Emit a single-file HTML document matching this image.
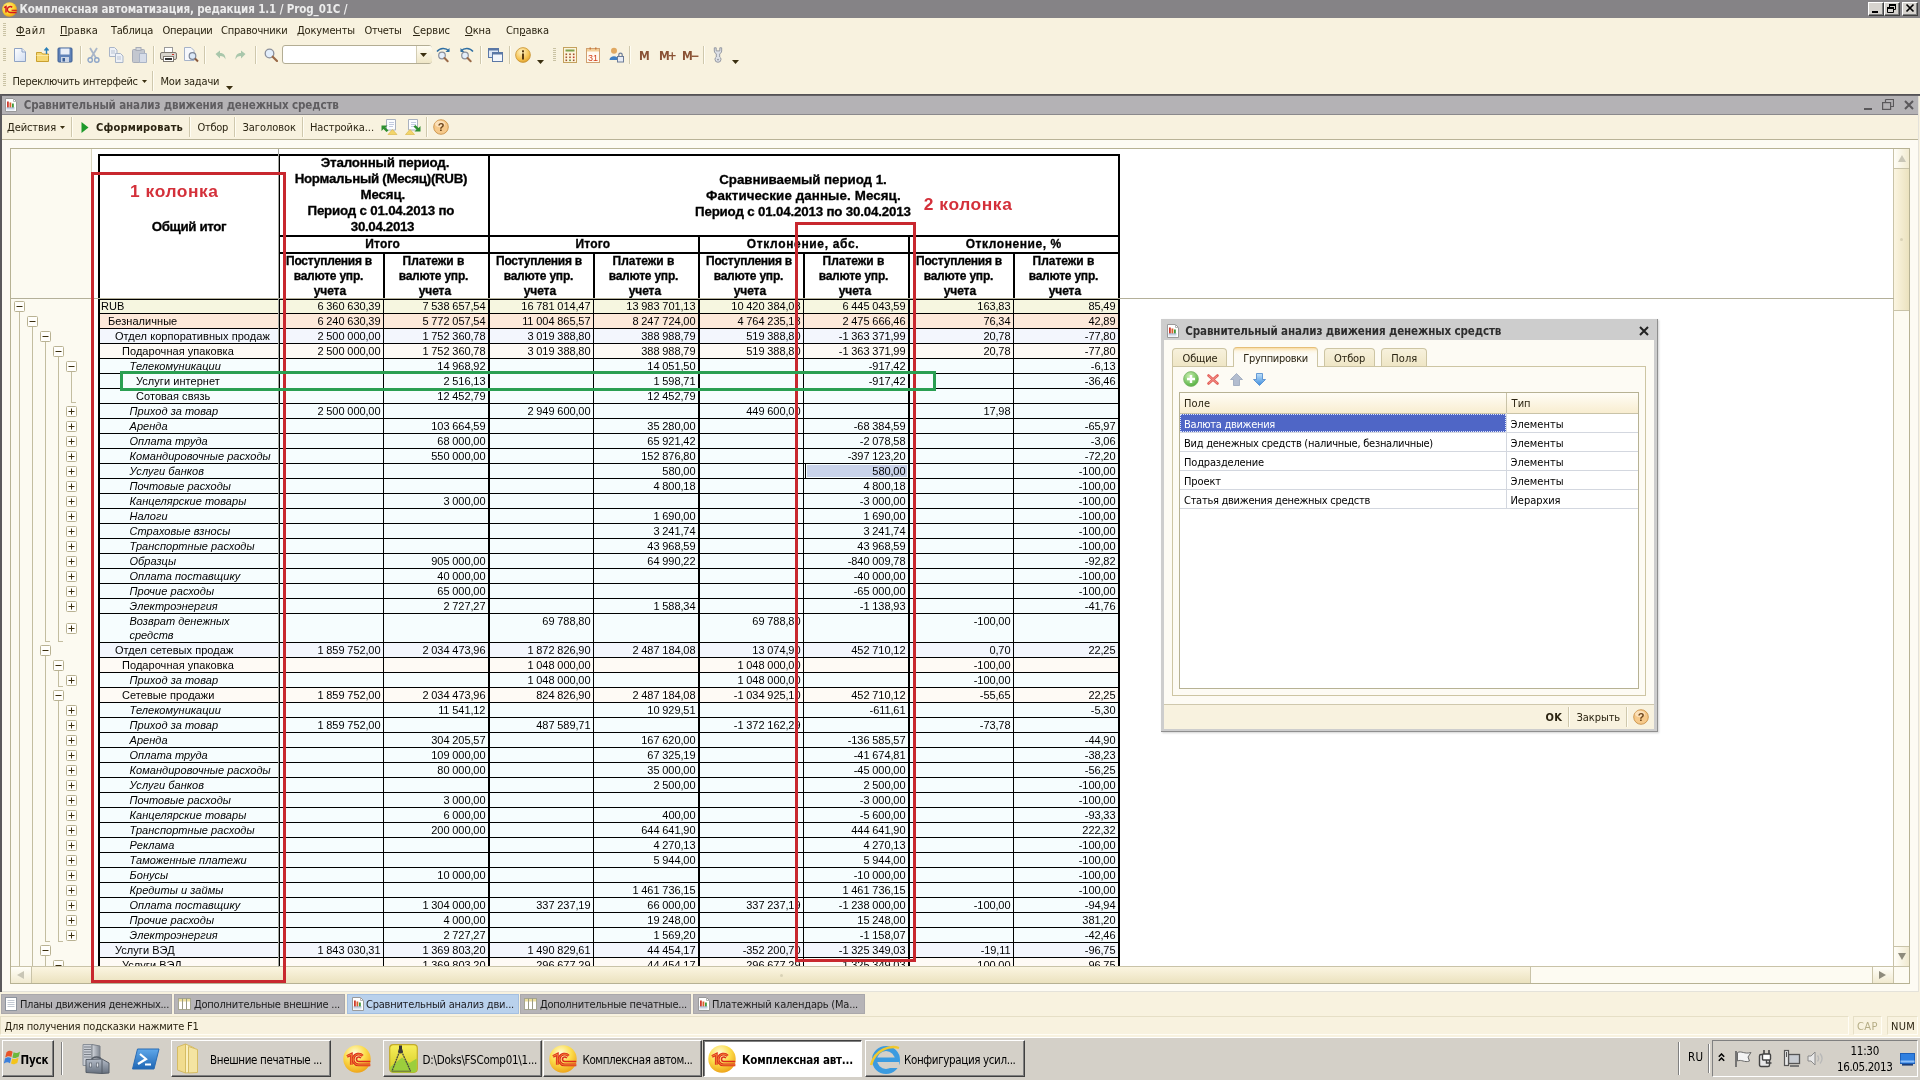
<!DOCTYPE html>
<html lang="ru"><head><meta charset="utf-8"><title>Комплексная автоматизация, редакция 1.1 / Prog_01C /</title>
<style>
html,body{margin:0;padding:0}
body{width:1920px;height:1080px;position:relative;overflow:hidden;background:#f8f2df;font-family:'DejaVu Sans Condensed','Liberation Sans',sans-serif;font-size:11px}
div,span.t,svg.a{position:absolute}
span.t{white-space:nowrap}
.clip{overflow:hidden}
#root{left:0;top:0;width:1920px;height:1080px;will-change:transform}
.wb{width:16px;height:14px;background:#d6d3ce;box-sizing:border-box;border:1px solid;border-color:#fff #404040 #404040 #fff;box-shadow:inset -1px -1px 0 #808080}
u{text-decoration:underline;text-underline-offset:1px}
</style></head>
<body>
<div id="root">
<div style="left:0px;top:0px;width:1920px;height:18px;background:#858386;"></div><svg class="a" style="left:2px;top:2px" width="15" height="15" viewBox="0 0 15 15"><defs><radialGradient id="g1c" cx="40%" cy="35%" r="70%"><stop offset="0" stop-color="#fff6a0"/><stop offset="0.6" stop-color="#fbd02c"/><stop offset="1" stop-color="#e99a12"/></radialGradient></defs><circle cx="7.5" cy="7.5" r="7.3" fill="url(#g1c)"/><path d="M2.2 5.6 L4 4.6 L4 10.6" fill="none" stroke="#d3171c" stroke-width="1.5"/><path d="M10.2 5.4 A2.9 2.9 0 1 0 8.6 10.4 L14.6 10.4" fill="none" stroke="#d3171c" stroke-width="1.5"/><path d="M9.6 8.3 L14.8 8.3" fill="none" stroke="#d3171c" stroke-width="1.1"/></svg><span class="t" style="top:2.12px;font-size:11.5px;line-height:15px;color:#ececec;font-weight:bold;letter-spacing:-0.110px;left:19.5px;">Комплексная автоматизация, редакция 1.1 / Prog_01C /</span><div class="wb" style="left:1868px;top:2px;"><svg width="16" height="14" viewBox="0 0 16 14" style="position:absolute;left:-1px;top:-2px"><rect x="4" y="10" width="6" height="2" fill="#000"/></svg></div><div class="wb" style="left:1884px;top:2px;"><svg width="16" height="14" viewBox="0 0 16 14" style="position:absolute;left:-1px;top:-2px"><path d="M5.5 3.5h6v5h-6z M5.5 4.5h6" fill="none" stroke="#000" stroke-width="1"/><rect x="5" y="3" width="7" height="2" fill="#000"/><path d="M3.5 6.5h6v5h-6z" fill="#d6d3ce" stroke="#000" stroke-width="1"/><rect x="3" y="6" width="7" height="2" fill="#000"/></svg></div><div class="wb" style="left:1902px;top:2px;"><svg width="16" height="14" viewBox="0 0 16 14" style="position:absolute;left:-1px;top:-2px"><path d="M4.5 3.5 L11.5 10.5 M11.5 3.5 L4.5 10.5" stroke="#000" stroke-width="1.7" fill="none"/></svg></div><div style="left:0px;top:18px;width:1920px;height:76px;background:#f8f2df;"></div><div style="left:3px;top:23px;width:3px;height:1px;background:#c9c2a3;"></div><div style="left:3px;top:25px;width:3px;height:1px;background:#c9c2a3;"></div><div style="left:3px;top:27px;width:3px;height:1px;background:#c9c2a3;"></div><div style="left:3px;top:29px;width:3px;height:1px;background:#c9c2a3;"></div><div style="left:3px;top:31px;width:3px;height:1px;background:#c9c2a3;"></div><div style="left:3px;top:33px;width:3px;height:1px;background:#c9c2a3;"></div><div style="left:3px;top:35px;width:3px;height:1px;background:#c9c2a3;"></div><span class="t" style="top:24.49px;font-size:11px;line-height:14px;color:#2b2412;letter-spacing:0.535px;left:16px;"><u>Ф</u>айл</span><span class="t" style="top:24.49px;font-size:11px;line-height:14px;color:#2b2412;letter-spacing:0.052px;left:60px;"><u>П</u>равка</span><span class="t" style="top:24.49px;font-size:11px;line-height:14px;color:#2b2412;letter-spacing:-0.252px;left:111px;">Таблица</span><span class="t" style="top:24.49px;font-size:11px;line-height:14px;color:#2b2412;letter-spacing:-0.287px;left:162.5px;">Операции</span><span class="t" style="top:24.49px;font-size:11px;line-height:14px;color:#2b2412;letter-spacing:-0.207px;left:221px;">Справочники</span><span class="t" style="top:24.49px;font-size:11px;line-height:14px;color:#2b2412;letter-spacing:-0.137px;left:297px;">Документы</span><span class="t" style="top:24.49px;font-size:11px;line-height:14px;color:#2b2412;letter-spacing:-0.346px;left:364.5px;">Отчеты</span><span class="t" style="top:24.49px;font-size:11px;line-height:14px;color:#2b2412;left:413px;"><u>С</u>ервис</span><span class="t" style="top:24.49px;font-size:11px;line-height:14px;color:#2b2412;letter-spacing:-0.078px;left:465px;"><u>О</u>кна</span><span class="t" style="top:24.49px;font-size:11px;line-height:14px;color:#2b2412;letter-spacing:-0.092px;left:506px;">Сп<u>р</u>авка</span><div style="left:3px;top:48px;width:3px;height:1px;background:#c9c2a3;"></div><div style="left:3px;top:50px;width:3px;height:1px;background:#c9c2a3;"></div><div style="left:3px;top:52px;width:3px;height:1px;background:#c9c2a3;"></div><div style="left:3px;top:54px;width:3px;height:1px;background:#c9c2a3;"></div><div style="left:3px;top:56px;width:3px;height:1px;background:#c9c2a3;"></div><div style="left:3px;top:58px;width:3px;height:1px;background:#c9c2a3;"></div><div style="left:3px;top:60px;width:3px;height:1px;background:#c9c2a3;"></div><svg class="a" style="left:13px;top:47px" width="14" height="16" viewBox="0 0 14 16"><defs><linearGradient id="gdoc" x1="0" y1="0" x2="1" y2="1"><stop offset="0" stop-color="#fff"/><stop offset="1" stop-color="#cfdcf2"/></linearGradient></defs><path d="M1.5 1.5h7.5l3.5 3.5v9.5h-11z" fill="url(#gdoc)" stroke="#8fa3c4"/><path d="M9 1.5v3.5h3.5" fill="#e8eefa" stroke="#8fa3c4"/></svg><svg class="a" style="left:35px;top:46px" width="16" height="17" viewBox="0 0 16 17"><path d="M1.5 6.5h5l1 1.5h6v7.5h-12z" fill="#f6d873" stroke="#c9a030"/><path d="M1.5 9.5h12" stroke="#fbe9a5"/><path d="M11.5 8V2.5M9.5 4.5l2-2.5l2 2.5" fill="none" stroke="#2a7fb8" stroke-width="1.4"/></svg><svg class="a" style="left:57px;top:47px" width="16" height="16" viewBox="0 0 16 16"><rect x="1" y="1" width="14" height="14" rx="1" fill="#5f82b8" stroke="#3d5f94"/><rect x="3.5" y="1.5" width="9" height="6" fill="#e9eef7"/><rect x="4" y="10" width="8" height="5" fill="#c9d4e6"/><rect x="5.5" y="11" width="2.5" height="3.5" fill="#3d5f94"/></svg><div style="left:80px;top:46px;width:1px;height:18px;background:#cfc8ad;"></div><div style="left:81px;top:46px;width:1px;height:18px;background:#fffdf3;"></div><svg class="a" style="left:87px;top:47px" width="13" height="16" viewBox="0 0 13 16"><path d="M3 1L9 11M10 1L4 11" stroke="#a9b6c8" stroke-width="1.8" fill="none"/><circle cx="3.2" cy="13" r="2.2" fill="none" stroke="#8ea6c8" stroke-width="1.4"/><circle cx="9.8" cy="13" r="2.2" fill="none" stroke="#8ea6c8" stroke-width="1.4"/></svg><svg class="a" style="left:108px;top:47px" width="16" height="16" viewBox="0 0 16 16"><path d="M1.5 0.5h5l2.5 2.5v6.5h-7.5z" fill="#eef1f6" stroke="#a9b5c8"/><path d="M7.5 6.5h5l2.5 2.5v6.5h-7.5z" fill="#eef1f6" stroke="#a9b5c8"/><path d="M3 4h4M3 6h4M9 10h4M9 12h4" stroke="#b9c3d3"/></svg><svg class="a" style="left:132px;top:47px" width="15" height="16" viewBox="0 0 15 16"><rect x="0.5" y="2.5" width="12" height="13" rx="1" fill="#c3c7cf" stroke="#a8adb8"/><rect x="4" y="0.5" width="5" height="3" fill="#d5d8de" stroke="#a8adb8"/><path d="M7.5 6.5h7v9h-7z" fill="#d6dce8" stroke="#aab4c6"/></svg><div style="left:153px;top:46px;width:1px;height:18px;background:#cfc8ad;"></div><div style="left:154px;top:46px;width:1px;height:18px;background:#fffdf3;"></div><svg class="a" style="left:160px;top:47px" width="17" height="16" viewBox="0 0 17 16"><rect x="4.5" y="0.5" width="8" height="6" fill="#fff" stroke="#9a9a9a"/><rect x="0.5" y="5.5" width="16" height="7" rx="1.5" fill="#d8d4cc" stroke="#7d7870"/><rect x="3.5" y="9.5" width="10" height="5" fill="#fff" stroke="#7d7870"/><rect x="5" y="11" width="7" height="2" fill="#333"/><rect x="12" y="7" width="2" height="1" fill="#d0342c"/></svg><svg class="a" style="left:183px;top:47px" width="16" height="16" viewBox="0 0 16 16"><path d="M1.5 0.5h6.5l3 3v10h-9.5z" fill="#f6f8fc" stroke="#a6b3c9"/><circle cx="9.5" cy="9" r="3.3" fill="#dbe8f7" stroke="#7d8799" stroke-width="1.2"/><path d="M12 11.5l3 3" stroke="#8a5a3c" stroke-width="2"/></svg><div style="left:204px;top:46px;width:1px;height:18px;background:#cfc8ad;"></div><div style="left:205px;top:46px;width:1px;height:18px;background:#fffdf3;"></div><svg class="a" style="left:215px;top:50px" width="11" height="10" viewBox="0 0 11 10"><path d="M0.5 4L5 0.5V3C9 3 10.5 5.5 10.5 9.5C9.5 7 8 6 5 6V8.5z" fill="#a9c7ab"/></svg><svg class="a" style="left:235px;top:50px" width="11" height="10" viewBox="0 0 11 10"><path d="M10.5 4L6 0.5V3C2 3 0.5 5.5 0.5 9.5C1.5 7 3 6 6 6V8.5z" fill="#a9c7ab"/></svg><div style="left:255px;top:46px;width:1px;height:18px;background:#cfc8ad;"></div><div style="left:256px;top:46px;width:1px;height:18px;background:#fffdf3;"></div><svg class="a" style="left:264px;top:48px" width="14" height="14" viewBox="0 0 14 14"><circle cx="5.5" cy="5.5" r="4.3" fill="#e3eefb" stroke="#8a8f9c" stroke-width="1.3"/><path d="M8.7 8.7l4.3 4.3" stroke="#9a6a48" stroke-width="2.2" stroke-linecap="round"/></svg><div style="left:282px;top:45px;width:150px;height:19px;background:#fff;border:1px solid #b3ad94;border-radius:3px;box-sizing:border-box;"></div><div style="left:416px;top:46px;width:15px;height:17px;background:linear-gradient(#fffdf4,#efe6c6);border-left:1px solid #d3cdb4;border-radius:0 2px 2px 0;"></div><svg class="a" style="left:420px;top:53px" width="7" height="4" viewBox="0 0 7 4"><polygon points="0,0 7,0 3.5,4" fill="#3a2f10"/></svg><svg class="a" style="left:436px;top:47px" width="15" height="16" viewBox="0 0 15 16"><path d="M1 4.5C4 0.5 10 0.5 13 4" fill="none" stroke="#2f6fa3" stroke-width="1.4"/><path d="M13.5 1v4h-4z" fill="#2f6fa3"/><circle cx="6" cy="8.5" r="3.3" fill="#e3eefb" stroke="#8a8f9c" stroke-width="1.2"/><path d="M8.5 11l3.2 3.2" stroke="#9a6a48" stroke-width="2" stroke-linecap="round"/></svg><svg class="a" style="left:459px;top:47px" width="15" height="16" viewBox="0 0 15 16"><g transform="translate(15,0) scale(-1,1)"><path d="M1 4.5C4 0.5 10 0.5 13 4" fill="none" stroke="#2f6fa3" stroke-width="1.4"/><path d="M13.5 1v4h-4z" fill="#2f6fa3"/></g><circle cx="6" cy="8.5" r="3.3" fill="#e3eefb" stroke="#8a8f9c" stroke-width="1.2"/><path d="M8.5 11l3.2 3.2" stroke="#9a6a48" stroke-width="2" stroke-linecap="round"/></svg><div style="left:480px;top:46px;width:1px;height:18px;background:#cfc8ad;"></div><div style="left:481px;top:46px;width:1px;height:18px;background:#fffdf3;"></div><svg class="a" style="left:488px;top:48px" width="15" height="14" viewBox="0 0 15 14"><rect x="0.5" y="0.5" width="10" height="9" fill="#dfe8f5" stroke="#5b78a6"/><rect x="0.5" y="0.5" width="10" height="2" fill="#5b78a6"/><rect x="4.5" y="4.5" width="10" height="9" fill="#f3f6fb" stroke="#5b78a6"/><rect x="4.5" y="4.5" width="10" height="2" fill="#5b78a6"/></svg><div style="left:509px;top:46px;width:1px;height:18px;background:#cfc8ad;"></div><div style="left:510px;top:46px;width:1px;height:18px;background:#fffdf3;"></div><svg class="a" style="left:515px;top:47px" width="16" height="16" viewBox="0 0 16 16"><defs><radialGradient id="ginf" cx="40%" cy="30%" r="75%"><stop offset="0" stop-color="#fff3c4"/><stop offset="0.7" stop-color="#f5c04c"/><stop offset="1" stop-color="#d99a2a"/></radialGradient></defs><circle cx="8" cy="8" r="7.4" fill="url(#ginf)" stroke="#c89436" stroke-width="0.8"/><rect x="7" y="6.5" width="2" height="6" fill="#5a3b12"/><rect x="7" y="3.3" width="2" height="2" fill="#5a3b12"/></svg><svg class="a" style="left:537px;top:60px" width="7" height="4" viewBox="0 0 7 4"><polygon points="0,0 7,0 3.5,4" fill="#3a2f10"/></svg><div style="left:553px;top:48px;width:3px;height:1px;background:#c9c2a3;"></div><div style="left:553px;top:50px;width:3px;height:1px;background:#c9c2a3;"></div><div style="left:553px;top:52px;width:3px;height:1px;background:#c9c2a3;"></div><div style="left:553px;top:54px;width:3px;height:1px;background:#c9c2a3;"></div><div style="left:553px;top:56px;width:3px;height:1px;background:#c9c2a3;"></div><div style="left:553px;top:58px;width:3px;height:1px;background:#c9c2a3;"></div><div style="left:553px;top:60px;width:3px;height:1px;background:#c9c2a3;"></div><svg class="a" style="left:563px;top:47px" width="14" height="16" viewBox="0 0 14 16"><rect x="0.5" y="0.5" width="13" height="15" fill="#fdf4dc" stroke="#c4a25e"/><rect x="2.5" y="2.5" width="9" height="2" fill="#7fa04c"/><g fill="#a0522d"><rect x="2.5" y="6.5" width="1.6" height="1.6"/><rect x="6.2" y="6.5" width="1.6" height="1.6"/><rect x="9.9" y="6.5" width="1.6" height="1.6"/><rect x="2.5" y="9.5" width="1.6" height="1.6"/><rect x="6.2" y="9.5" width="1.6" height="1.6"/><rect x="9.9" y="9.5" width="1.6" height="1.6" fill="#c23a2a"/><rect x="2.5" y="12.5" width="1.6" height="1.6"/><rect x="6.2" y="12.5" width="1.6" height="1.6" fill="#5a8a3a"/><rect x="9.9" y="12.5" width="1.6" height="1.6"/></g></svg><svg class="a" style="left:586px;top:47px" width="14" height="16" viewBox="0 0 14 16"><rect x="0.5" y="1.5" width="13" height="14" fill="#fffaf0" stroke="#cfa070"/><rect x="1" y="2" width="12" height="2.5" fill="#f4cf98"/><rect x="3.5" y="0.5" width="1.5" height="2" fill="#c8783c"/><rect x="9" y="0.5" width="1.5" height="2" fill="#c8783c"/><text x="7" y="13.5" font-size="9" font-family="Liberation Sans,sans-serif" text-anchor="middle" fill="#d3401c">31</text></svg><svg class="a" style="left:609px;top:47px" width="15" height="16" viewBox="0 0 15 16"><circle cx="5" cy="3.8" r="3" fill="#e0a860"/><path d="M0.5 13c0-5 9-5 9 0z" fill="#3f7fc4"/><rect x="8.5" y="9.5" width="6" height="5.5" fill="#e8ecf4" stroke="#6c7c98"/><path d="M9.8 9.5v-1.7a1.7 1.7 0 0 1 3.4 0v1.7" fill="none" stroke="#6c7c98" stroke-width="1.2"/></svg><div style="left:629px;top:46px;width:1px;height:18px;background:#cfc8ad;"></div><div style="left:630px;top:46px;width:1px;height:18px;background:#fffdf3;"></div><span class="t" style="top:48.45px;font-size:12px;line-height:16px;color:#8a5234;font-weight:bold;letter-spacing:-1.250px;left:639px;">M</span><span class="t" style="top:48.45px;font-size:12px;line-height:16px;color:#8a5234;font-weight:bold;letter-spacing:-1.898px;left:659px;">M+</span><span class="t" style="top:48.45px;font-size:12px;line-height:16px;color:#8a5234;font-weight:bold;letter-spacing:-2.148px;left:682px;">M−</span><div style="left:703px;top:46px;width:1px;height:18px;background:#cfc8ad;"></div><div style="left:704px;top:46px;width:1px;height:18px;background:#fffdf3;"></div><svg class="a" style="left:712px;top:47px" width="12" height="16" viewBox="0 0 12 16"><path d="M2.3 0.8v3.2q0 2 2 2.8v3.2q-1.3 0.7-1.3 2.3a3 3 0 0 0 6 0q0-1.6-1.3-2.3v-3.2q2-0.8 2-2.8v-3.2h-1.9v3.1h-3.6v-3.1z" fill="#dde0e6" stroke="#8d929c" stroke-width="0.9"/><circle cx="6" cy="12.6" r="0.9" fill="#8d929c"/></svg><svg class="a" style="left:732px;top:60px" width="7" height="4" viewBox="0 0 7 4"><polygon points="0,0 7,0 3.5,4" fill="#3a2f10"/></svg><div style="left:3px;top:73px;width:3px;height:1px;background:#c9c2a3;"></div><div style="left:3px;top:75px;width:3px;height:1px;background:#c9c2a3;"></div><div style="left:3px;top:77px;width:3px;height:1px;background:#c9c2a3;"></div><div style="left:3px;top:79px;width:3px;height:1px;background:#c9c2a3;"></div><div style="left:3px;top:81px;width:3px;height:1px;background:#c9c2a3;"></div><div style="left:3px;top:83px;width:3px;height:1px;background:#c9c2a3;"></div><div style="left:3px;top:85px;width:3px;height:1px;background:#c9c2a3;"></div><span class="t" style="top:74.79px;font-size:11px;line-height:14px;color:#2b2412;letter-spacing:-0.268px;left:12.4px;">Переключить интерфейс</span><svg class="a" style="left:142px;top:80px" width="5" height="3" viewBox="0 0 5 3"><polygon points="0,0 5,0 2.5,3" fill="#3a2f10"/></svg><div style="left:152px;top:71px;width:1px;height:20px;background:#cfc8ad;"></div><div style="left:153px;top:71px;width:1px;height:20px;background:#fffdf3;"></div><span class="t" style="top:74.79px;font-size:11px;line-height:14px;color:#2b2412;letter-spacing:-0.169px;left:160.4px;">Мои задачи</span><svg class="a" style="left:226px;top:86px" width="7" height="4" viewBox="0 0 7 4"><polygon points="0,0 7,0 3.5,4" fill="#3a2f10"/></svg><div style="left:0px;top:94px;width:1920px;height:2px;background:linear-gradient(#4c4a4d,#6c6a6d);"></div><div style="left:0px;top:96px;width:1920px;height:18px;background:#b4b2b5;"></div><div style="left:0px;top:114px;width:1920px;height:1px;background:#8b898c;"></div><div style="left:0px;top:115px;width:1920px;height:24px;background:#f8f2df;"></div><div style="left:0px;top:139px;width:1920px;height:1px;background:#b9b397;"></div><div style="left:0px;top:140px;width:1920px;height:852px;background:#fdfbf3;"></div><div style="left:0px;top:94px;width:2px;height:898px;background:#5c5a5d;"></div><div style="left:1918px;top:96px;width:1px;height:896px;background:#e4e2da;"></div><div style="left:1919px;top:96px;width:1px;height:896px;background:#f8f2df;"></div><div style="left:2px;top:991px;width:1917px;height:1px;background:#e4e2da;"></div><svg class="a" style="left:5px;top:98px" width="12" height="14" viewBox="0 0 12 14"><path d="M0.5 0.5h8l3 3v10h-11z" fill="#fff" stroke="#9a9a9a"/><path d="M8.5 0.5v3h3" fill="none" stroke="#b5b5b5"/><rect x="2" y="3.5" width="1.8" height="6" fill="#cf3b2e"/><rect x="4.5" y="4.5" width="1.8" height="5" fill="#d8622e"/><rect x="7" y="5.5" width="1.8" height="4" fill="#3f9a3a"/><path d="M1.5 10h8" stroke="#6a8ab8" stroke-width="0.8"/><path d="M1.5 11.8h8" stroke="#c4d0e4" stroke-width="0.8"/></svg><span class="t" style="top:98.22px;font-size:11.5px;line-height:15px;color:#5f5d60;font-weight:bold;letter-spacing:-0.137px;left:23.7px;">Сравнительный анализ движения денежных средств</span><div style="left:1864px;top:108px;width:8px;height:2px;background:#5a585b;"></div><svg class="a" style="left:1882px;top:99px" width="12" height="11" viewBox="0 0 12 11"><path d="M3.5 0.5h8v7h-2.5 M3.5 3v-2.5" fill="none" stroke="#5a585b" stroke-width="1.2"/><rect x="0.6" y="3.6" width="8" height="6.8" fill="none" stroke="#5a585b" stroke-width="1.2"/></svg><svg class="a" style="left:1904px;top:100px" width="10" height="10" viewBox="0 0 10 10"><path d="M1 1L9 9M9 1L1 9" stroke="#5a585b" stroke-width="2" fill="none"/></svg><span class="t" style="top:120.99px;font-size:11px;line-height:14px;color:#2b2412;letter-spacing:-0.084px;left:7px;">Действия</span><svg class="a" style="left:60px;top:126px" width="5" height="3" viewBox="0 0 5 3"><polygon points="0,0 5,0 2.5,3" fill="#3a2f10"/></svg><div style="left:71px;top:117px;width:1px;height:20px;background:#cfc8ad;"></div><div style="left:72px;top:117px;width:1px;height:20px;background:#fffdf3;"></div><svg class="a" style="left:81px;top:122px" width="8" height="11" viewBox="0 0 8 11"><path d="M0.5 0L7.5 5.5L0.5 11z" fill="#1d9a2a"/></svg><span class="t" style="top:120.99px;font-size:11px;line-height:14px;color:#2b2412;font-weight:bold;letter-spacing:0.182px;left:96px;">Сформировать</span><div style="left:189px;top:117px;width:1px;height:20px;background:#cfc8ad;"></div><div style="left:190px;top:117px;width:1px;height:20px;background:#fffdf3;"></div><span class="t" style="top:120.99px;font-size:11px;line-height:14px;color:#2b2412;letter-spacing:-0.300px;left:197.5px;">Отбор</span><div style="left:234px;top:117px;width:1px;height:20px;background:#cfc8ad;"></div><div style="left:235px;top:117px;width:1px;height:20px;background:#fffdf3;"></div><span class="t" style="top:120.99px;font-size:11px;line-height:14px;color:#2b2412;letter-spacing:-0.045px;left:242.5px;">Заголовок</span><div style="left:302px;top:117px;width:1px;height:20px;background:#cfc8ad;"></div><div style="left:303px;top:117px;width:1px;height:20px;background:#fffdf3;"></div><span class="t" style="top:120.99px;font-size:11px;line-height:14px;color:#2b2412;letter-spacing:-0.079px;left:310px;">Настройка...</span><svg class="a" style="left:381px;top:119px" width="17" height="16" viewBox="0 0 17 16"><path d="M5.5 0.5h9v10.5h-9z" fill="#fcfdff" stroke="#a9b1bf"/><path d="M7.5 3.5h5M7.5 5.5h5M7.5 7.5h4" stroke="#c3cbe0" stroke-width="1" shape-rendering="crispEdges"/><path d="M0.5 6.5h6l-2 2l3 3l-2 1.5l-3-3l-2 2z" fill="#2f8f2f"/><path d="M7 15.5l4.5-5l4.5 5z" fill="#f3d56a" stroke="#d8b440" stroke-width="0.6"/></svg><svg class="a" style="left:405px;top:119px" width="17" height="16" viewBox="0 0 17 16"><path d="M3.5 0.5h9v10.5h-9z" fill="#fcfdff" stroke="#a9b1bf"/><path d="M5.5 3.5h5M5.5 5.5h5M5.5 7.5h4" stroke="#c3cbe0" stroke-width="1" shape-rendering="crispEdges"/><path d="M15.5 12.5h-6l2-2l-3-3l2-1.5l3 3l2-2z" fill="#2f8f2f"/><path d="M0.5 15.5l4.5-5l4.5 5z" fill="#f3d56a" stroke="#d8b440" stroke-width="0.6"/></svg><div style="left:426px;top:117px;width:1px;height:20px;background:#cfc8ad;"></div><div style="left:427px;top:117px;width:1px;height:20px;background:#fffdf3;"></div><svg class="a" style="left:433px;top:119px" width="16" height="16" viewBox="0 0 16 16"><circle cx="8" cy="8" r="7.3" fill="#f6c98a" stroke="#c9924a" stroke-width="0.9"/><ellipse cx="7" cy="5" rx="5" ry="3.3" fill="#fde6c4" opacity="0.8"/><text x="8" y="12" font-size="11" font-weight="bold" font-family="Liberation Sans,sans-serif" text-anchor="middle" fill="#6a4218">?</text></svg><div style="left:10px;top:148px;width:1900px;height:836px;background:#fff;border:1px solid #b7b294;box-sizing:border-box;"></div><div style="left:11px;top:149px;width:81px;height:818px;background:#fcfaf1;"></div><div style="left:91px;top:149px;width:1px;height:149px;background:#d9d4bc;"></div><div style="left:1893px;top:149px;width:16px;height:818px;background:#fdfbf2;border-left:1px solid #c9c3a8;box-sizing:border-box;"></div><div style="left:1894px;top:149px;width:15px;height:20px;background:linear-gradient(90deg,#fffef8,#f1ead0);border-bottom:1px solid #c9c3a8;box-sizing:border-box;"></div><svg class="a" style="left:1898px;top:155px" width="8" height="7"><path d="M0 7L4 0L8 7z" fill="#c9c6b6"/></svg><div style="left:1894px;top:169px;width:15px;height:142px;background:linear-gradient(90deg,#fbf5e1,#ebe2bf);border-bottom:1px solid #c9c3a8;box-sizing:border-box;"></div><div style="left:1900px;top:238px;width:3px;height:3px;background:#d9d2b6;border-radius:2px;"></div><div style="left:1894px;top:946px;width:15px;height:21px;background:linear-gradient(90deg,#fffef8,#f1ead0);border-top:1px solid #c9c3a8;box-sizing:border-box;"></div><svg class="a" style="left:1898px;top:953px" width="8" height="7"><path d="M0 0L4 7L8 0z" fill="#8e8b7c"/></svg><div style="left:11px;top:966px;width:1898px;height:17px;background:#fdfbf2;border-top:1px solid #c9c3a8;box-sizing:border-box;"></div><div style="left:11px;top:967px;width:21px;height:16px;background:linear-gradient(#fffef8,#f1ead0);border-right:1px solid #c9c3a8;box-sizing:border-box;"></div><svg class="a" style="left:17px;top:971px" width="7" height="8"><path d="M7 0L0 4L7 8z" fill="#c9c6b6"/></svg><div style="left:32px;top:967px;width:1499px;height:16px;background:linear-gradient(#fbf5e1,#ebe2bf);border-right:1px solid #c9c3a8;box-sizing:border-box;"></div><div style="left:780px;top:974px;width:3px;height:3px;background:#d9d2b6;border-radius:2px;"></div><div style="left:1872px;top:967px;width:22px;height:16px;background:linear-gradient(#fffef8,#f1ead0);border-left:1px solid #c9c3a8;border-right:1px solid #c9c3a8;box-sizing:border-box;"></div><svg class="a" style="left:1879px;top:971px" width="7" height="8"><path d="M0 0L7 4L0 8z" fill="#8e8b7c"/></svg><div class="clip" style="left:11px;top:149px;width:1883px;height:817px"><div style="left:89px;top:150px;width:1019px;height:14px;background:#f6f6e0;"></div><div style="left:87px;top:164px;width:1022px;height:1px;background:#000;"></div><span class="t" style="top:149.99px;font-size:11px;line-height:14px;color:#000;font-family:'Liberation Sans',sans-serif;letter-spacing:0.050px;left:90px;">RUB</span><span class="t" style="right:1513.6px;top:149.99px;font-size:11px;line-height:14px;font-family:'Liberation Sans',sans-serif;letter-spacing:-0.1px">6 360 630,39</span><span class="t" style="right:1408.6px;top:149.99px;font-size:11px;line-height:14px;font-family:'Liberation Sans',sans-serif;letter-spacing:-0.1px">7 538 657,54</span><span class="t" style="right:1303.6px;top:149.99px;font-size:11px;line-height:14px;font-family:'Liberation Sans',sans-serif;letter-spacing:-0.1px">16 781 014,47</span><span class="t" style="right:1198.6px;top:149.99px;font-size:11px;line-height:14px;font-family:'Liberation Sans',sans-serif;letter-spacing:-0.1px">13 983 701,13</span><span class="t" style="right:1093.6px;top:149.99px;font-size:11px;line-height:14px;font-family:'Liberation Sans',sans-serif;letter-spacing:-0.1px">10 420 384,08</span><span class="t" style="right:988.6px;top:149.99px;font-size:11px;line-height:14px;font-family:'Liberation Sans',sans-serif;letter-spacing:-0.1px">6 445 043,59</span><span class="t" style="right:883.6px;top:149.99px;font-size:11px;line-height:14px;font-family:'Liberation Sans',sans-serif;letter-spacing:-0.1px">163,83</span><span class="t" style="right:778.6px;top:149.99px;font-size:11px;line-height:14px;font-family:'Liberation Sans',sans-serif;letter-spacing:-0.1px">85,49</span><div style="left:89px;top:165px;width:1019px;height:14px;background:#fde9da;"></div><div style="left:87px;top:179px;width:1022px;height:1px;background:#000;"></div><span class="t" style="top:164.99px;font-size:11px;line-height:14px;color:#000;font-family:'Liberation Sans',sans-serif;letter-spacing:0.050px;left:97px;">Безналичные</span><span class="t" style="right:1513.6px;top:164.99px;font-size:11px;line-height:14px;font-family:'Liberation Sans',sans-serif;letter-spacing:-0.1px">6 240 630,39</span><span class="t" style="right:1408.6px;top:164.99px;font-size:11px;line-height:14px;font-family:'Liberation Sans',sans-serif;letter-spacing:-0.1px">5 772 057,54</span><span class="t" style="right:1303.6px;top:164.99px;font-size:11px;line-height:14px;font-family:'Liberation Sans',sans-serif;letter-spacing:-0.1px">11 004 865,57</span><span class="t" style="right:1198.6px;top:164.99px;font-size:11px;line-height:14px;font-family:'Liberation Sans',sans-serif;letter-spacing:-0.1px">8 247 724,00</span><span class="t" style="right:1093.6px;top:164.99px;font-size:11px;line-height:14px;font-family:'Liberation Sans',sans-serif;letter-spacing:-0.1px">4 764 235,18</span><span class="t" style="right:988.6px;top:164.99px;font-size:11px;line-height:14px;font-family:'Liberation Sans',sans-serif;letter-spacing:-0.1px">2 475 666,46</span><span class="t" style="right:883.6px;top:164.99px;font-size:11px;line-height:14px;font-family:'Liberation Sans',sans-serif;letter-spacing:-0.1px">76,34</span><span class="t" style="right:778.6px;top:164.99px;font-size:11px;line-height:14px;font-family:'Liberation Sans',sans-serif;letter-spacing:-0.1px">42,89</span><div style="left:89px;top:180px;width:1019px;height:14px;background:#f3f6fd;"></div><div style="left:87px;top:194px;width:1022px;height:1px;background:#000;"></div><span class="t" style="top:179.99px;font-size:11px;line-height:14px;color:#000;font-family:'Liberation Sans',sans-serif;letter-spacing:0.050px;left:104px;">Отдел корпоративных продаж</span><span class="t" style="right:1513.6px;top:179.99px;font-size:11px;line-height:14px;font-family:'Liberation Sans',sans-serif;letter-spacing:-0.1px">2 500 000,00</span><span class="t" style="right:1408.6px;top:179.99px;font-size:11px;line-height:14px;font-family:'Liberation Sans',sans-serif;letter-spacing:-0.1px">1 752 360,78</span><span class="t" style="right:1303.6px;top:179.99px;font-size:11px;line-height:14px;font-family:'Liberation Sans',sans-serif;letter-spacing:-0.1px">3 019 388,80</span><span class="t" style="right:1198.6px;top:179.99px;font-size:11px;line-height:14px;font-family:'Liberation Sans',sans-serif;letter-spacing:-0.1px">388 988,79</span><span class="t" style="right:1093.6px;top:179.99px;font-size:11px;line-height:14px;font-family:'Liberation Sans',sans-serif;letter-spacing:-0.1px">519 388,80</span><span class="t" style="right:988.6px;top:179.99px;font-size:11px;line-height:14px;font-family:'Liberation Sans',sans-serif;letter-spacing:-0.1px">-1 363 371,99</span><span class="t" style="right:883.6px;top:179.99px;font-size:11px;line-height:14px;font-family:'Liberation Sans',sans-serif;letter-spacing:-0.1px">20,78</span><span class="t" style="right:778.6px;top:179.99px;font-size:11px;line-height:14px;font-family:'Liberation Sans',sans-serif;letter-spacing:-0.1px">-77,80</span><div style="left:89px;top:195px;width:1019px;height:14px;background:#fefaf5;"></div><div style="left:87px;top:209px;width:1022px;height:1px;background:#000;"></div><span class="t" style="top:194.99px;font-size:11px;line-height:14px;color:#000;font-family:'Liberation Sans',sans-serif;letter-spacing:0.050px;left:111px;">Подарочная упаковка</span><span class="t" style="right:1513.6px;top:194.99px;font-size:11px;line-height:14px;font-family:'Liberation Sans',sans-serif;letter-spacing:-0.1px">2 500 000,00</span><span class="t" style="right:1408.6px;top:194.99px;font-size:11px;line-height:14px;font-family:'Liberation Sans',sans-serif;letter-spacing:-0.1px">1 752 360,78</span><span class="t" style="right:1303.6px;top:194.99px;font-size:11px;line-height:14px;font-family:'Liberation Sans',sans-serif;letter-spacing:-0.1px">3 019 388,80</span><span class="t" style="right:1198.6px;top:194.99px;font-size:11px;line-height:14px;font-family:'Liberation Sans',sans-serif;letter-spacing:-0.1px">388 988,79</span><span class="t" style="right:1093.6px;top:194.99px;font-size:11px;line-height:14px;font-family:'Liberation Sans',sans-serif;letter-spacing:-0.1px">519 388,80</span><span class="t" style="right:988.6px;top:194.99px;font-size:11px;line-height:14px;font-family:'Liberation Sans',sans-serif;letter-spacing:-0.1px">-1 363 371,99</span><span class="t" style="right:883.6px;top:194.99px;font-size:11px;line-height:14px;font-family:'Liberation Sans',sans-serif;letter-spacing:-0.1px">20,78</span><span class="t" style="right:778.6px;top:194.99px;font-size:11px;line-height:14px;font-family:'Liberation Sans',sans-serif;letter-spacing:-0.1px">-77,80</span><div style="left:89px;top:210px;width:1019px;height:14px;background:#f6fdfe;"></div><div style="left:87px;top:224px;width:1022px;height:1px;background:#000;"></div><span class="t" style="top:209.99px;font-size:11px;line-height:14px;color:#000;font-family:'Liberation Sans',sans-serif;font-style:italic;letter-spacing:0.050px;left:118.5px;">Телекомуникации</span><span class="t" style="right:1408.6px;top:209.99px;font-size:11px;line-height:14px;font-family:'Liberation Sans',sans-serif;letter-spacing:-0.1px">14 968,92</span><span class="t" style="right:1198.6px;top:209.99px;font-size:11px;line-height:14px;font-family:'Liberation Sans',sans-serif;letter-spacing:-0.1px">14 051,50</span><span class="t" style="right:988.6px;top:209.99px;font-size:11px;line-height:14px;font-family:'Liberation Sans',sans-serif;letter-spacing:-0.1px">-917,42</span><span class="t" style="right:778.6px;top:209.99px;font-size:11px;line-height:14px;font-family:'Liberation Sans',sans-serif;letter-spacing:-0.1px">-6,13</span><div style="left:89px;top:225px;width:1019px;height:14px;background:#f6fdfe;"></div><div style="left:87px;top:239px;width:1022px;height:1px;background:#000;"></div><span class="t" style="top:224.99px;font-size:11px;line-height:14px;color:#000;font-family:'Liberation Sans',sans-serif;letter-spacing:0.050px;left:125px;">Услуги интернет</span><span class="t" style="right:1408.6px;top:224.99px;font-size:11px;line-height:14px;font-family:'Liberation Sans',sans-serif;letter-spacing:-0.1px">2 516,13</span><span class="t" style="right:1198.6px;top:224.99px;font-size:11px;line-height:14px;font-family:'Liberation Sans',sans-serif;letter-spacing:-0.1px">1 598,71</span><span class="t" style="right:988.6px;top:224.99px;font-size:11px;line-height:14px;font-family:'Liberation Sans',sans-serif;letter-spacing:-0.1px">-917,42</span><span class="t" style="right:778.6px;top:224.99px;font-size:11px;line-height:14px;font-family:'Liberation Sans',sans-serif;letter-spacing:-0.1px">-36,46</span><div style="left:89px;top:240px;width:1019px;height:14px;background:#f6fdfe;"></div><div style="left:87px;top:254px;width:1022px;height:1px;background:#000;"></div><span class="t" style="top:239.99px;font-size:11px;line-height:14px;color:#000;font-family:'Liberation Sans',sans-serif;letter-spacing:0.050px;left:125px;">Сотовая связь</span><span class="t" style="right:1408.6px;top:239.99px;font-size:11px;line-height:14px;font-family:'Liberation Sans',sans-serif;letter-spacing:-0.1px">12 452,79</span><span class="t" style="right:1198.6px;top:239.99px;font-size:11px;line-height:14px;font-family:'Liberation Sans',sans-serif;letter-spacing:-0.1px">12 452,79</span><div style="left:89px;top:255px;width:1019px;height:14px;background:#f6fdfe;"></div><div style="left:87px;top:269px;width:1022px;height:1px;background:#000;"></div><span class="t" style="top:254.99px;font-size:11px;line-height:14px;color:#000;font-family:'Liberation Sans',sans-serif;font-style:italic;letter-spacing:0.050px;left:118.5px;">Приход за товар</span><span class="t" style="right:1513.6px;top:254.99px;font-size:11px;line-height:14px;font-family:'Liberation Sans',sans-serif;letter-spacing:-0.1px">2 500 000,00</span><span class="t" style="right:1303.6px;top:254.99px;font-size:11px;line-height:14px;font-family:'Liberation Sans',sans-serif;letter-spacing:-0.1px">2 949 600,00</span><span class="t" style="right:1093.6px;top:254.99px;font-size:11px;line-height:14px;font-family:'Liberation Sans',sans-serif;letter-spacing:-0.1px">449 600,00</span><span class="t" style="right:883.6px;top:254.99px;font-size:11px;line-height:14px;font-family:'Liberation Sans',sans-serif;letter-spacing:-0.1px">17,98</span><div style="left:89px;top:270px;width:1019px;height:14px;background:#f6fdfe;"></div><div style="left:87px;top:284px;width:1022px;height:1px;background:#000;"></div><span class="t" style="top:269.99px;font-size:11px;line-height:14px;color:#000;font-family:'Liberation Sans',sans-serif;font-style:italic;letter-spacing:0.050px;left:118.5px;">Аренда</span><span class="t" style="right:1408.6px;top:269.99px;font-size:11px;line-height:14px;font-family:'Liberation Sans',sans-serif;letter-spacing:-0.1px">103 664,59</span><span class="t" style="right:1198.6px;top:269.99px;font-size:11px;line-height:14px;font-family:'Liberation Sans',sans-serif;letter-spacing:-0.1px">35 280,00</span><span class="t" style="right:988.6px;top:269.99px;font-size:11px;line-height:14px;font-family:'Liberation Sans',sans-serif;letter-spacing:-0.1px">-68 384,59</span><span class="t" style="right:778.6px;top:269.99px;font-size:11px;line-height:14px;font-family:'Liberation Sans',sans-serif;letter-spacing:-0.1px">-65,97</span><div style="left:89px;top:285px;width:1019px;height:14px;background:#f6fdfe;"></div><div style="left:87px;top:299px;width:1022px;height:1px;background:#000;"></div><span class="t" style="top:284.99px;font-size:11px;line-height:14px;color:#000;font-family:'Liberation Sans',sans-serif;font-style:italic;letter-spacing:0.050px;left:118.5px;">Оплата труда</span><span class="t" style="right:1408.6px;top:284.99px;font-size:11px;line-height:14px;font-family:'Liberation Sans',sans-serif;letter-spacing:-0.1px">68 000,00</span><span class="t" style="right:1198.6px;top:284.99px;font-size:11px;line-height:14px;font-family:'Liberation Sans',sans-serif;letter-spacing:-0.1px">65 921,42</span><span class="t" style="right:988.6px;top:284.99px;font-size:11px;line-height:14px;font-family:'Liberation Sans',sans-serif;letter-spacing:-0.1px">-2 078,58</span><span class="t" style="right:778.6px;top:284.99px;font-size:11px;line-height:14px;font-family:'Liberation Sans',sans-serif;letter-spacing:-0.1px">-3,06</span><div style="left:89px;top:300px;width:1019px;height:14px;background:#f6fdfe;"></div><div style="left:87px;top:314px;width:1022px;height:1px;background:#000;"></div><span class="t" style="top:299.99px;font-size:11px;line-height:14px;color:#000;font-family:'Liberation Sans',sans-serif;font-style:italic;letter-spacing:0.050px;left:118.5px;">Командировочные расходы</span><span class="t" style="right:1408.6px;top:299.99px;font-size:11px;line-height:14px;font-family:'Liberation Sans',sans-serif;letter-spacing:-0.1px">550 000,00</span><span class="t" style="right:1198.6px;top:299.99px;font-size:11px;line-height:14px;font-family:'Liberation Sans',sans-serif;letter-spacing:-0.1px">152 876,80</span><span class="t" style="right:988.6px;top:299.99px;font-size:11px;line-height:14px;font-family:'Liberation Sans',sans-serif;letter-spacing:-0.1px">-397 123,20</span><span class="t" style="right:778.6px;top:299.99px;font-size:11px;line-height:14px;font-family:'Liberation Sans',sans-serif;letter-spacing:-0.1px">-72,20</span><div style="left:89px;top:315px;width:1019px;height:14px;background:#f6fdfe;"></div><div style="left:87px;top:329px;width:1022px;height:1px;background:#000;"></div><span class="t" style="top:314.99px;font-size:11px;line-height:14px;color:#000;font-family:'Liberation Sans',sans-serif;font-style:italic;letter-spacing:0.050px;left:118.5px;">Услуги банков</span><span class="t" style="right:1198.6px;top:314.99px;font-size:11px;line-height:14px;font-family:'Liberation Sans',sans-serif;letter-spacing:-0.1px">580,00</span><span class="t" style="right:988.6px;top:314.99px;font-size:11px;line-height:14px;font-family:'Liberation Sans',sans-serif;letter-spacing:-0.1px">580,00</span><span class="t" style="right:778.6px;top:314.99px;font-size:11px;line-height:14px;font-family:'Liberation Sans',sans-serif;letter-spacing:-0.1px">-100,00</span><div style="left:89px;top:330px;width:1019px;height:14px;background:#f6fdfe;"></div><div style="left:87px;top:344px;width:1022px;height:1px;background:#000;"></div><span class="t" style="top:329.99px;font-size:11px;line-height:14px;color:#000;font-family:'Liberation Sans',sans-serif;font-style:italic;letter-spacing:0.050px;left:118.5px;">Почтовые расходы</span><span class="t" style="right:1198.6px;top:329.99px;font-size:11px;line-height:14px;font-family:'Liberation Sans',sans-serif;letter-spacing:-0.1px">4 800,18</span><span class="t" style="right:988.6px;top:329.99px;font-size:11px;line-height:14px;font-family:'Liberation Sans',sans-serif;letter-spacing:-0.1px">4 800,18</span><span class="t" style="right:778.6px;top:329.99px;font-size:11px;line-height:14px;font-family:'Liberation Sans',sans-serif;letter-spacing:-0.1px">-100,00</span><div style="left:89px;top:345px;width:1019px;height:14px;background:#f6fdfe;"></div><div style="left:87px;top:359px;width:1022px;height:1px;background:#000;"></div><span class="t" style="top:344.99px;font-size:11px;line-height:14px;color:#000;font-family:'Liberation Sans',sans-serif;font-style:italic;letter-spacing:0.050px;left:118.5px;">Канцелярские товары</span><span class="t" style="right:1408.6px;top:344.99px;font-size:11px;line-height:14px;font-family:'Liberation Sans',sans-serif;letter-spacing:-0.1px">3 000,00</span><span class="t" style="right:988.6px;top:344.99px;font-size:11px;line-height:14px;font-family:'Liberation Sans',sans-serif;letter-spacing:-0.1px">-3 000,00</span><span class="t" style="right:778.6px;top:344.99px;font-size:11px;line-height:14px;font-family:'Liberation Sans',sans-serif;letter-spacing:-0.1px">-100,00</span><div style="left:89px;top:360px;width:1019px;height:14px;background:#f6fdfe;"></div><div style="left:87px;top:374px;width:1022px;height:1px;background:#000;"></div><span class="t" style="top:359.99px;font-size:11px;line-height:14px;color:#000;font-family:'Liberation Sans',sans-serif;font-style:italic;letter-spacing:0.050px;left:118.5px;">Налоги</span><span class="t" style="right:1198.6px;top:359.99px;font-size:11px;line-height:14px;font-family:'Liberation Sans',sans-serif;letter-spacing:-0.1px">1 690,00</span><span class="t" style="right:988.6px;top:359.99px;font-size:11px;line-height:14px;font-family:'Liberation Sans',sans-serif;letter-spacing:-0.1px">1 690,00</span><span class="t" style="right:778.6px;top:359.99px;font-size:11px;line-height:14px;font-family:'Liberation Sans',sans-serif;letter-spacing:-0.1px">-100,00</span><div style="left:89px;top:375px;width:1019px;height:14px;background:#f6fdfe;"></div><div style="left:87px;top:389px;width:1022px;height:1px;background:#000;"></div><span class="t" style="top:374.99px;font-size:11px;line-height:14px;color:#000;font-family:'Liberation Sans',sans-serif;font-style:italic;letter-spacing:0.050px;left:118.5px;">Страховые взносы</span><span class="t" style="right:1198.6px;top:374.99px;font-size:11px;line-height:14px;font-family:'Liberation Sans',sans-serif;letter-spacing:-0.1px">3 241,74</span><span class="t" style="right:988.6px;top:374.99px;font-size:11px;line-height:14px;font-family:'Liberation Sans',sans-serif;letter-spacing:-0.1px">3 241,74</span><span class="t" style="right:778.6px;top:374.99px;font-size:11px;line-height:14px;font-family:'Liberation Sans',sans-serif;letter-spacing:-0.1px">-100,00</span><div style="left:89px;top:390px;width:1019px;height:14px;background:#f6fdfe;"></div><div style="left:87px;top:404px;width:1022px;height:1px;background:#000;"></div><span class="t" style="top:389.99px;font-size:11px;line-height:14px;color:#000;font-family:'Liberation Sans',sans-serif;font-style:italic;letter-spacing:0.050px;left:118.5px;">Транспортные расходы</span><span class="t" style="right:1198.6px;top:389.99px;font-size:11px;line-height:14px;font-family:'Liberation Sans',sans-serif;letter-spacing:-0.1px">43 968,59</span><span class="t" style="right:988.6px;top:389.99px;font-size:11px;line-height:14px;font-family:'Liberation Sans',sans-serif;letter-spacing:-0.1px">43 968,59</span><span class="t" style="right:778.6px;top:389.99px;font-size:11px;line-height:14px;font-family:'Liberation Sans',sans-serif;letter-spacing:-0.1px">-100,00</span><div style="left:89px;top:405px;width:1019px;height:14px;background:#f6fdfe;"></div><div style="left:87px;top:419px;width:1022px;height:1px;background:#000;"></div><span class="t" style="top:404.99px;font-size:11px;line-height:14px;color:#000;font-family:'Liberation Sans',sans-serif;font-style:italic;letter-spacing:0.050px;left:118.5px;">Образцы</span><span class="t" style="right:1408.6px;top:404.99px;font-size:11px;line-height:14px;font-family:'Liberation Sans',sans-serif;letter-spacing:-0.1px">905 000,00</span><span class="t" style="right:1198.6px;top:404.99px;font-size:11px;line-height:14px;font-family:'Liberation Sans',sans-serif;letter-spacing:-0.1px">64 990,22</span><span class="t" style="right:988.6px;top:404.99px;font-size:11px;line-height:14px;font-family:'Liberation Sans',sans-serif;letter-spacing:-0.1px">-840 009,78</span><span class="t" style="right:778.6px;top:404.99px;font-size:11px;line-height:14px;font-family:'Liberation Sans',sans-serif;letter-spacing:-0.1px">-92,82</span><div style="left:89px;top:420px;width:1019px;height:14px;background:#f6fdfe;"></div><div style="left:87px;top:434px;width:1022px;height:1px;background:#000;"></div><span class="t" style="top:419.99px;font-size:11px;line-height:14px;color:#000;font-family:'Liberation Sans',sans-serif;font-style:italic;letter-spacing:0.050px;left:118.5px;">Оплата поставщику</span><span class="t" style="right:1408.6px;top:419.99px;font-size:11px;line-height:14px;font-family:'Liberation Sans',sans-serif;letter-spacing:-0.1px">40 000,00</span><span class="t" style="right:988.6px;top:419.99px;font-size:11px;line-height:14px;font-family:'Liberation Sans',sans-serif;letter-spacing:-0.1px">-40 000,00</span><span class="t" style="right:778.6px;top:419.99px;font-size:11px;line-height:14px;font-family:'Liberation Sans',sans-serif;letter-spacing:-0.1px">-100,00</span><div style="left:89px;top:435px;width:1019px;height:14px;background:#f6fdfe;"></div><div style="left:87px;top:449px;width:1022px;height:1px;background:#000;"></div><span class="t" style="top:434.99px;font-size:11px;line-height:14px;color:#000;font-family:'Liberation Sans',sans-serif;font-style:italic;letter-spacing:0.050px;left:118.5px;">Прочие расходы</span><span class="t" style="right:1408.6px;top:434.99px;font-size:11px;line-height:14px;font-family:'Liberation Sans',sans-serif;letter-spacing:-0.1px">65 000,00</span><span class="t" style="right:988.6px;top:434.99px;font-size:11px;line-height:14px;font-family:'Liberation Sans',sans-serif;letter-spacing:-0.1px">-65 000,00</span><span class="t" style="right:778.6px;top:434.99px;font-size:11px;line-height:14px;font-family:'Liberation Sans',sans-serif;letter-spacing:-0.1px">-100,00</span><div style="left:89px;top:450px;width:1019px;height:14px;background:#f6fdfe;"></div><div style="left:87px;top:464px;width:1022px;height:1px;background:#000;"></div><span class="t" style="top:449.99px;font-size:11px;line-height:14px;color:#000;font-family:'Liberation Sans',sans-serif;font-style:italic;letter-spacing:0.050px;left:118.5px;">Электроэнергия</span><span class="t" style="right:1408.6px;top:449.99px;font-size:11px;line-height:14px;font-family:'Liberation Sans',sans-serif;letter-spacing:-0.1px">2 727,27</span><span class="t" style="right:1198.6px;top:449.99px;font-size:11px;line-height:14px;font-family:'Liberation Sans',sans-serif;letter-spacing:-0.1px">1 588,34</span><span class="t" style="right:988.6px;top:449.99px;font-size:11px;line-height:14px;font-family:'Liberation Sans',sans-serif;letter-spacing:-0.1px">-1 138,93</span><span class="t" style="right:778.6px;top:449.99px;font-size:11px;line-height:14px;font-family:'Liberation Sans',sans-serif;letter-spacing:-0.1px">-41,76</span><div style="left:89px;top:465px;width:1019px;height:28px;background:#f6fdfe;"></div><div style="left:87px;top:493px;width:1022px;height:1px;background:#000;"></div><span class="t" style="top:464.99px;font-size:11px;line-height:14px;color:#000;font-family:'Liberation Sans',sans-serif;font-style:italic;left:118.5px;">Возврат денежных</span><span class="t" style="top:478.99px;font-size:11px;line-height:14px;color:#000;font-family:'Liberation Sans',sans-serif;font-style:italic;left:118.5px;">средств</span><span class="t" style="right:1303.6px;top:464.99px;font-size:11px;line-height:14px;font-family:'Liberation Sans',sans-serif;letter-spacing:-0.1px">69 788,80</span><span class="t" style="right:1093.6px;top:464.99px;font-size:11px;line-height:14px;font-family:'Liberation Sans',sans-serif;letter-spacing:-0.1px">69 788,80</span><span class="t" style="right:883.6px;top:464.99px;font-size:11px;line-height:14px;font-family:'Liberation Sans',sans-serif;letter-spacing:-0.1px">-100,00</span><div style="left:89px;top:494px;width:1019px;height:14px;background:#f3f6fd;"></div><div style="left:87px;top:508px;width:1022px;height:1px;background:#000;"></div><span class="t" style="top:493.99px;font-size:11px;line-height:14px;color:#000;font-family:'Liberation Sans',sans-serif;letter-spacing:0.050px;left:104px;">Отдел сетевых продаж</span><span class="t" style="right:1513.6px;top:493.99px;font-size:11px;line-height:14px;font-family:'Liberation Sans',sans-serif;letter-spacing:-0.1px">1 859 752,00</span><span class="t" style="right:1408.6px;top:493.99px;font-size:11px;line-height:14px;font-family:'Liberation Sans',sans-serif;letter-spacing:-0.1px">2 034 473,96</span><span class="t" style="right:1303.6px;top:493.99px;font-size:11px;line-height:14px;font-family:'Liberation Sans',sans-serif;letter-spacing:-0.1px">1 872 826,90</span><span class="t" style="right:1198.6px;top:493.99px;font-size:11px;line-height:14px;font-family:'Liberation Sans',sans-serif;letter-spacing:-0.1px">2 487 184,08</span><span class="t" style="right:1093.6px;top:493.99px;font-size:11px;line-height:14px;font-family:'Liberation Sans',sans-serif;letter-spacing:-0.1px">13 074,90</span><span class="t" style="right:988.6px;top:493.99px;font-size:11px;line-height:14px;font-family:'Liberation Sans',sans-serif;letter-spacing:-0.1px">452 710,12</span><span class="t" style="right:883.6px;top:493.99px;font-size:11px;line-height:14px;font-family:'Liberation Sans',sans-serif;letter-spacing:-0.1px">0,70</span><span class="t" style="right:778.6px;top:493.99px;font-size:11px;line-height:14px;font-family:'Liberation Sans',sans-serif;letter-spacing:-0.1px">22,25</span><div style="left:89px;top:509px;width:1019px;height:14px;background:#fefaf5;"></div><div style="left:87px;top:523px;width:1022px;height:1px;background:#000;"></div><span class="t" style="top:508.99px;font-size:11px;line-height:14px;color:#000;font-family:'Liberation Sans',sans-serif;letter-spacing:0.050px;left:111px;">Подарочная упаковка</span><span class="t" style="right:1303.6px;top:508.99px;font-size:11px;line-height:14px;font-family:'Liberation Sans',sans-serif;letter-spacing:-0.1px">1 048 000,00</span><span class="t" style="right:1093.6px;top:508.99px;font-size:11px;line-height:14px;font-family:'Liberation Sans',sans-serif;letter-spacing:-0.1px">1 048 000,00</span><span class="t" style="right:883.6px;top:508.99px;font-size:11px;line-height:14px;font-family:'Liberation Sans',sans-serif;letter-spacing:-0.1px">-100,00</span><div style="left:89px;top:524px;width:1019px;height:14px;background:#f6fdfe;"></div><div style="left:87px;top:538px;width:1022px;height:1px;background:#000;"></div><span class="t" style="top:523.99px;font-size:11px;line-height:14px;color:#000;font-family:'Liberation Sans',sans-serif;font-style:italic;letter-spacing:0.050px;left:118.5px;">Приход за товар</span><span class="t" style="right:1303.6px;top:523.99px;font-size:11px;line-height:14px;font-family:'Liberation Sans',sans-serif;letter-spacing:-0.1px">1 048 000,00</span><span class="t" style="right:1093.6px;top:523.99px;font-size:11px;line-height:14px;font-family:'Liberation Sans',sans-serif;letter-spacing:-0.1px">1 048 000,00</span><span class="t" style="right:883.6px;top:523.99px;font-size:11px;line-height:14px;font-family:'Liberation Sans',sans-serif;letter-spacing:-0.1px">-100,00</span><div style="left:89px;top:539px;width:1019px;height:14px;background:#fefaf5;"></div><div style="left:87px;top:553px;width:1022px;height:1px;background:#000;"></div><span class="t" style="top:538.99px;font-size:11px;line-height:14px;color:#000;font-family:'Liberation Sans',sans-serif;letter-spacing:0.050px;left:111px;">Сетевые продажи</span><span class="t" style="right:1513.6px;top:538.99px;font-size:11px;line-height:14px;font-family:'Liberation Sans',sans-serif;letter-spacing:-0.1px">1 859 752,00</span><span class="t" style="right:1408.6px;top:538.99px;font-size:11px;line-height:14px;font-family:'Liberation Sans',sans-serif;letter-spacing:-0.1px">2 034 473,96</span><span class="t" style="right:1303.6px;top:538.99px;font-size:11px;line-height:14px;font-family:'Liberation Sans',sans-serif;letter-spacing:-0.1px">824 826,90</span><span class="t" style="right:1198.6px;top:538.99px;font-size:11px;line-height:14px;font-family:'Liberation Sans',sans-serif;letter-spacing:-0.1px">2 487 184,08</span><span class="t" style="right:1093.6px;top:538.99px;font-size:11px;line-height:14px;font-family:'Liberation Sans',sans-serif;letter-spacing:-0.1px">-1 034 925,10</span><span class="t" style="right:988.6px;top:538.99px;font-size:11px;line-height:14px;font-family:'Liberation Sans',sans-serif;letter-spacing:-0.1px">452 710,12</span><span class="t" style="right:883.6px;top:538.99px;font-size:11px;line-height:14px;font-family:'Liberation Sans',sans-serif;letter-spacing:-0.1px">-55,65</span><span class="t" style="right:778.6px;top:538.99px;font-size:11px;line-height:14px;font-family:'Liberation Sans',sans-serif;letter-spacing:-0.1px">22,25</span><div style="left:89px;top:554px;width:1019px;height:14px;background:#f6fdfe;"></div><div style="left:87px;top:568px;width:1022px;height:1px;background:#000;"></div><span class="t" style="top:553.99px;font-size:11px;line-height:14px;color:#000;font-family:'Liberation Sans',sans-serif;font-style:italic;letter-spacing:0.050px;left:118.5px;">Телекомуникации</span><span class="t" style="right:1408.6px;top:553.99px;font-size:11px;line-height:14px;font-family:'Liberation Sans',sans-serif;letter-spacing:-0.1px">11 541,12</span><span class="t" style="right:1198.6px;top:553.99px;font-size:11px;line-height:14px;font-family:'Liberation Sans',sans-serif;letter-spacing:-0.1px">10 929,51</span><span class="t" style="right:988.6px;top:553.99px;font-size:11px;line-height:14px;font-family:'Liberation Sans',sans-serif;letter-spacing:-0.1px">-611,61</span><span class="t" style="right:778.6px;top:553.99px;font-size:11px;line-height:14px;font-family:'Liberation Sans',sans-serif;letter-spacing:-0.1px">-5,30</span><div style="left:89px;top:569px;width:1019px;height:14px;background:#f6fdfe;"></div><div style="left:87px;top:583px;width:1022px;height:1px;background:#000;"></div><span class="t" style="top:568.99px;font-size:11px;line-height:14px;color:#000;font-family:'Liberation Sans',sans-serif;font-style:italic;letter-spacing:0.050px;left:118.5px;">Приход за товар</span><span class="t" style="right:1513.6px;top:568.99px;font-size:11px;line-height:14px;font-family:'Liberation Sans',sans-serif;letter-spacing:-0.1px">1 859 752,00</span><span class="t" style="right:1303.6px;top:568.99px;font-size:11px;line-height:14px;font-family:'Liberation Sans',sans-serif;letter-spacing:-0.1px">487 589,71</span><span class="t" style="right:1093.6px;top:568.99px;font-size:11px;line-height:14px;font-family:'Liberation Sans',sans-serif;letter-spacing:-0.1px">-1 372 162,29</span><span class="t" style="right:883.6px;top:568.99px;font-size:11px;line-height:14px;font-family:'Liberation Sans',sans-serif;letter-spacing:-0.1px">-73,78</span><div style="left:89px;top:584px;width:1019px;height:14px;background:#f6fdfe;"></div><div style="left:87px;top:598px;width:1022px;height:1px;background:#000;"></div><span class="t" style="top:583.99px;font-size:11px;line-height:14px;color:#000;font-family:'Liberation Sans',sans-serif;font-style:italic;letter-spacing:0.050px;left:118.5px;">Аренда</span><span class="t" style="right:1408.6px;top:583.99px;font-size:11px;line-height:14px;font-family:'Liberation Sans',sans-serif;letter-spacing:-0.1px">304 205,57</span><span class="t" style="right:1198.6px;top:583.99px;font-size:11px;line-height:14px;font-family:'Liberation Sans',sans-serif;letter-spacing:-0.1px">167 620,00</span><span class="t" style="right:988.6px;top:583.99px;font-size:11px;line-height:14px;font-family:'Liberation Sans',sans-serif;letter-spacing:-0.1px">-136 585,57</span><span class="t" style="right:778.6px;top:583.99px;font-size:11px;line-height:14px;font-family:'Liberation Sans',sans-serif;letter-spacing:-0.1px">-44,90</span><div style="left:89px;top:599px;width:1019px;height:14px;background:#f6fdfe;"></div><div style="left:87px;top:613px;width:1022px;height:1px;background:#000;"></div><span class="t" style="top:598.99px;font-size:11px;line-height:14px;color:#000;font-family:'Liberation Sans',sans-serif;font-style:italic;letter-spacing:0.050px;left:118.5px;">Оплата труда</span><span class="t" style="right:1408.6px;top:598.99px;font-size:11px;line-height:14px;font-family:'Liberation Sans',sans-serif;letter-spacing:-0.1px">109 000,00</span><span class="t" style="right:1198.6px;top:598.99px;font-size:11px;line-height:14px;font-family:'Liberation Sans',sans-serif;letter-spacing:-0.1px">67 325,19</span><span class="t" style="right:988.6px;top:598.99px;font-size:11px;line-height:14px;font-family:'Liberation Sans',sans-serif;letter-spacing:-0.1px">-41 674,81</span><span class="t" style="right:778.6px;top:598.99px;font-size:11px;line-height:14px;font-family:'Liberation Sans',sans-serif;letter-spacing:-0.1px">-38,23</span><div style="left:89px;top:614px;width:1019px;height:14px;background:#f6fdfe;"></div><div style="left:87px;top:628px;width:1022px;height:1px;background:#000;"></div><span class="t" style="top:613.99px;font-size:11px;line-height:14px;color:#000;font-family:'Liberation Sans',sans-serif;font-style:italic;letter-spacing:0.050px;left:118.5px;">Командировочные расходы</span><span class="t" style="right:1408.6px;top:613.99px;font-size:11px;line-height:14px;font-family:'Liberation Sans',sans-serif;letter-spacing:-0.1px">80 000,00</span><span class="t" style="right:1198.6px;top:613.99px;font-size:11px;line-height:14px;font-family:'Liberation Sans',sans-serif;letter-spacing:-0.1px">35 000,00</span><span class="t" style="right:988.6px;top:613.99px;font-size:11px;line-height:14px;font-family:'Liberation Sans',sans-serif;letter-spacing:-0.1px">-45 000,00</span><span class="t" style="right:778.6px;top:613.99px;font-size:11px;line-height:14px;font-family:'Liberation Sans',sans-serif;letter-spacing:-0.1px">-56,25</span><div style="left:89px;top:629px;width:1019px;height:14px;background:#f6fdfe;"></div><div style="left:87px;top:643px;width:1022px;height:1px;background:#000;"></div><span class="t" style="top:628.99px;font-size:11px;line-height:14px;color:#000;font-family:'Liberation Sans',sans-serif;font-style:italic;letter-spacing:0.050px;left:118.5px;">Услуги банков</span><span class="t" style="right:1198.6px;top:628.99px;font-size:11px;line-height:14px;font-family:'Liberation Sans',sans-serif;letter-spacing:-0.1px">2 500,00</span><span class="t" style="right:988.6px;top:628.99px;font-size:11px;line-height:14px;font-family:'Liberation Sans',sans-serif;letter-spacing:-0.1px">2 500,00</span><span class="t" style="right:778.6px;top:628.99px;font-size:11px;line-height:14px;font-family:'Liberation Sans',sans-serif;letter-spacing:-0.1px">-100,00</span><div style="left:89px;top:644px;width:1019px;height:14px;background:#f6fdfe;"></div><div style="left:87px;top:658px;width:1022px;height:1px;background:#000;"></div><span class="t" style="top:643.99px;font-size:11px;line-height:14px;color:#000;font-family:'Liberation Sans',sans-serif;font-style:italic;letter-spacing:0.050px;left:118.5px;">Почтовые расходы</span><span class="t" style="right:1408.6px;top:643.99px;font-size:11px;line-height:14px;font-family:'Liberation Sans',sans-serif;letter-spacing:-0.1px">3 000,00</span><span class="t" style="right:988.6px;top:643.99px;font-size:11px;line-height:14px;font-family:'Liberation Sans',sans-serif;letter-spacing:-0.1px">-3 000,00</span><span class="t" style="right:778.6px;top:643.99px;font-size:11px;line-height:14px;font-family:'Liberation Sans',sans-serif;letter-spacing:-0.1px">-100,00</span><div style="left:89px;top:659px;width:1019px;height:14px;background:#f6fdfe;"></div><div style="left:87px;top:673px;width:1022px;height:1px;background:#000;"></div><span class="t" style="top:658.99px;font-size:11px;line-height:14px;color:#000;font-family:'Liberation Sans',sans-serif;font-style:italic;letter-spacing:0.050px;left:118.5px;">Канцелярские товары</span><span class="t" style="right:1408.6px;top:658.99px;font-size:11px;line-height:14px;font-family:'Liberation Sans',sans-serif;letter-spacing:-0.1px">6 000,00</span><span class="t" style="right:1198.6px;top:658.99px;font-size:11px;line-height:14px;font-family:'Liberation Sans',sans-serif;letter-spacing:-0.1px">400,00</span><span class="t" style="right:988.6px;top:658.99px;font-size:11px;line-height:14px;font-family:'Liberation Sans',sans-serif;letter-spacing:-0.1px">-5 600,00</span><span class="t" style="right:778.6px;top:658.99px;font-size:11px;line-height:14px;font-family:'Liberation Sans',sans-serif;letter-spacing:-0.1px">-93,33</span><div style="left:89px;top:674px;width:1019px;height:14px;background:#f6fdfe;"></div><div style="left:87px;top:688px;width:1022px;height:1px;background:#000;"></div><span class="t" style="top:673.99px;font-size:11px;line-height:14px;color:#000;font-family:'Liberation Sans',sans-serif;font-style:italic;letter-spacing:0.050px;left:118.5px;">Транспортные расходы</span><span class="t" style="right:1408.6px;top:673.99px;font-size:11px;line-height:14px;font-family:'Liberation Sans',sans-serif;letter-spacing:-0.1px">200 000,00</span><span class="t" style="right:1198.6px;top:673.99px;font-size:11px;line-height:14px;font-family:'Liberation Sans',sans-serif;letter-spacing:-0.1px">644 641,90</span><span class="t" style="right:988.6px;top:673.99px;font-size:11px;line-height:14px;font-family:'Liberation Sans',sans-serif;letter-spacing:-0.1px">444 641,90</span><span class="t" style="right:778.6px;top:673.99px;font-size:11px;line-height:14px;font-family:'Liberation Sans',sans-serif;letter-spacing:-0.1px">222,32</span><div style="left:89px;top:689px;width:1019px;height:14px;background:#f6fdfe;"></div><div style="left:87px;top:703px;width:1022px;height:1px;background:#000;"></div><span class="t" style="top:688.99px;font-size:11px;line-height:14px;color:#000;font-family:'Liberation Sans',sans-serif;font-style:italic;letter-spacing:0.050px;left:118.5px;">Реклама</span><span class="t" style="right:1198.6px;top:688.99px;font-size:11px;line-height:14px;font-family:'Liberation Sans',sans-serif;letter-spacing:-0.1px">4 270,13</span><span class="t" style="right:988.6px;top:688.99px;font-size:11px;line-height:14px;font-family:'Liberation Sans',sans-serif;letter-spacing:-0.1px">4 270,13</span><span class="t" style="right:778.6px;top:688.99px;font-size:11px;line-height:14px;font-family:'Liberation Sans',sans-serif;letter-spacing:-0.1px">-100,00</span><div style="left:89px;top:704px;width:1019px;height:14px;background:#f6fdfe;"></div><div style="left:87px;top:718px;width:1022px;height:1px;background:#000;"></div><span class="t" style="top:703.99px;font-size:11px;line-height:14px;color:#000;font-family:'Liberation Sans',sans-serif;font-style:italic;letter-spacing:0.050px;left:118.5px;">Таможенные платежи</span><span class="t" style="right:1198.6px;top:703.99px;font-size:11px;line-height:14px;font-family:'Liberation Sans',sans-serif;letter-spacing:-0.1px">5 944,00</span><span class="t" style="right:988.6px;top:703.99px;font-size:11px;line-height:14px;font-family:'Liberation Sans',sans-serif;letter-spacing:-0.1px">5 944,00</span><span class="t" style="right:778.6px;top:703.99px;font-size:11px;line-height:14px;font-family:'Liberation Sans',sans-serif;letter-spacing:-0.1px">-100,00</span><div style="left:89px;top:719px;width:1019px;height:14px;background:#f6fdfe;"></div><div style="left:87px;top:733px;width:1022px;height:1px;background:#000;"></div><span class="t" style="top:718.99px;font-size:11px;line-height:14px;color:#000;font-family:'Liberation Sans',sans-serif;font-style:italic;letter-spacing:0.050px;left:118.5px;">Бонусы</span><span class="t" style="right:1408.6px;top:718.99px;font-size:11px;line-height:14px;font-family:'Liberation Sans',sans-serif;letter-spacing:-0.1px">10 000,00</span><span class="t" style="right:988.6px;top:718.99px;font-size:11px;line-height:14px;font-family:'Liberation Sans',sans-serif;letter-spacing:-0.1px">-10 000,00</span><span class="t" style="right:778.6px;top:718.99px;font-size:11px;line-height:14px;font-family:'Liberation Sans',sans-serif;letter-spacing:-0.1px">-100,00</span><div style="left:89px;top:734px;width:1019px;height:14px;background:#f6fdfe;"></div><div style="left:87px;top:748px;width:1022px;height:1px;background:#000;"></div><span class="t" style="top:733.99px;font-size:11px;line-height:14px;color:#000;font-family:'Liberation Sans',sans-serif;font-style:italic;letter-spacing:0.050px;left:118.5px;">Кредиты и займы</span><span class="t" style="right:1198.6px;top:733.99px;font-size:11px;line-height:14px;font-family:'Liberation Sans',sans-serif;letter-spacing:-0.1px">1 461 736,15</span><span class="t" style="right:988.6px;top:733.99px;font-size:11px;line-height:14px;font-family:'Liberation Sans',sans-serif;letter-spacing:-0.1px">1 461 736,15</span><span class="t" style="right:778.6px;top:733.99px;font-size:11px;line-height:14px;font-family:'Liberation Sans',sans-serif;letter-spacing:-0.1px">-100,00</span><div style="left:89px;top:749px;width:1019px;height:14px;background:#f6fdfe;"></div><div style="left:87px;top:763px;width:1022px;height:1px;background:#000;"></div><span class="t" style="top:748.99px;font-size:11px;line-height:14px;color:#000;font-family:'Liberation Sans',sans-serif;font-style:italic;letter-spacing:0.050px;left:118.5px;">Оплата поставщику</span><span class="t" style="right:1408.6px;top:748.99px;font-size:11px;line-height:14px;font-family:'Liberation Sans',sans-serif;letter-spacing:-0.1px">1 304 000,00</span><span class="t" style="right:1303.6px;top:748.99px;font-size:11px;line-height:14px;font-family:'Liberation Sans',sans-serif;letter-spacing:-0.1px">337 237,19</span><span class="t" style="right:1198.6px;top:748.99px;font-size:11px;line-height:14px;font-family:'Liberation Sans',sans-serif;letter-spacing:-0.1px">66 000,00</span><span class="t" style="right:1093.6px;top:748.99px;font-size:11px;line-height:14px;font-family:'Liberation Sans',sans-serif;letter-spacing:-0.1px">337 237,19</span><span class="t" style="right:988.6px;top:748.99px;font-size:11px;line-height:14px;font-family:'Liberation Sans',sans-serif;letter-spacing:-0.1px">-1 238 000,00</span><span class="t" style="right:883.6px;top:748.99px;font-size:11px;line-height:14px;font-family:'Liberation Sans',sans-serif;letter-spacing:-0.1px">-100,00</span><span class="t" style="right:778.6px;top:748.99px;font-size:11px;line-height:14px;font-family:'Liberation Sans',sans-serif;letter-spacing:-0.1px">-94,94</span><div style="left:89px;top:764px;width:1019px;height:14px;background:#f6fdfe;"></div><div style="left:87px;top:778px;width:1022px;height:1px;background:#000;"></div><span class="t" style="top:763.99px;font-size:11px;line-height:14px;color:#000;font-family:'Liberation Sans',sans-serif;font-style:italic;letter-spacing:0.050px;left:118.5px;">Прочие расходы</span><span class="t" style="right:1408.6px;top:763.99px;font-size:11px;line-height:14px;font-family:'Liberation Sans',sans-serif;letter-spacing:-0.1px">4 000,00</span><span class="t" style="right:1198.6px;top:763.99px;font-size:11px;line-height:14px;font-family:'Liberation Sans',sans-serif;letter-spacing:-0.1px">19 248,00</span><span class="t" style="right:988.6px;top:763.99px;font-size:11px;line-height:14px;font-family:'Liberation Sans',sans-serif;letter-spacing:-0.1px">15 248,00</span><span class="t" style="right:778.6px;top:763.99px;font-size:11px;line-height:14px;font-family:'Liberation Sans',sans-serif;letter-spacing:-0.1px">381,20</span><div style="left:89px;top:779px;width:1019px;height:14px;background:#f6fdfe;"></div><div style="left:87px;top:793px;width:1022px;height:1px;background:#000;"></div><span class="t" style="top:778.99px;font-size:11px;line-height:14px;color:#000;font-family:'Liberation Sans',sans-serif;font-style:italic;letter-spacing:0.050px;left:118.5px;">Электроэнергия</span><span class="t" style="right:1408.6px;top:778.99px;font-size:11px;line-height:14px;font-family:'Liberation Sans',sans-serif;letter-spacing:-0.1px">2 727,27</span><span class="t" style="right:1198.6px;top:778.99px;font-size:11px;line-height:14px;font-family:'Liberation Sans',sans-serif;letter-spacing:-0.1px">1 569,20</span><span class="t" style="right:988.6px;top:778.99px;font-size:11px;line-height:14px;font-family:'Liberation Sans',sans-serif;letter-spacing:-0.1px">-1 158,07</span><span class="t" style="right:778.6px;top:778.99px;font-size:11px;line-height:14px;font-family:'Liberation Sans',sans-serif;letter-spacing:-0.1px">-42,46</span><div style="left:89px;top:794px;width:1019px;height:14px;background:#f3f6fd;"></div><div style="left:87px;top:808px;width:1022px;height:1px;background:#000;"></div><span class="t" style="top:793.99px;font-size:11px;line-height:14px;color:#000;font-family:'Liberation Sans',sans-serif;letter-spacing:0.050px;left:104px;">Услуги ВЭД</span><span class="t" style="right:1513.6px;top:793.99px;font-size:11px;line-height:14px;font-family:'Liberation Sans',sans-serif;letter-spacing:-0.1px">1 843 030,31</span><span class="t" style="right:1408.6px;top:793.99px;font-size:11px;line-height:14px;font-family:'Liberation Sans',sans-serif;letter-spacing:-0.1px">1 369 803,20</span><span class="t" style="right:1303.6px;top:793.99px;font-size:11px;line-height:14px;font-family:'Liberation Sans',sans-serif;letter-spacing:-0.1px">1 490 829,61</span><span class="t" style="right:1198.6px;top:793.99px;font-size:11px;line-height:14px;font-family:'Liberation Sans',sans-serif;letter-spacing:-0.1px">44 454,17</span><span class="t" style="right:1093.6px;top:793.99px;font-size:11px;line-height:14px;font-family:'Liberation Sans',sans-serif;letter-spacing:-0.1px">-352 200,70</span><span class="t" style="right:988.6px;top:793.99px;font-size:11px;line-height:14px;font-family:'Liberation Sans',sans-serif;letter-spacing:-0.1px">-1 325 349,03</span><span class="t" style="right:883.6px;top:793.99px;font-size:11px;line-height:14px;font-family:'Liberation Sans',sans-serif;letter-spacing:-0.1px">-19,11</span><span class="t" style="right:778.6px;top:793.99px;font-size:11px;line-height:14px;font-family:'Liberation Sans',sans-serif;letter-spacing:-0.1px">-96,75</span><div style="left:89px;top:809px;width:1019px;height:14px;background:#fefaf5;"></div><div style="left:87px;top:823px;width:1022px;height:1px;background:#000;"></div><span class="t" style="top:808.99px;font-size:11px;line-height:14px;color:#000;font-family:'Liberation Sans',sans-serif;letter-spacing:0.050px;left:111px;">Услуги ВЭД</span><span class="t" style="right:1408.6px;top:808.99px;font-size:11px;line-height:14px;font-family:'Liberation Sans',sans-serif;letter-spacing:-0.1px">1 369 803,20</span><span class="t" style="right:1303.6px;top:808.99px;font-size:11px;line-height:14px;font-family:'Liberation Sans',sans-serif;letter-spacing:-0.1px">296 677,29</span><span class="t" style="right:1198.6px;top:808.99px;font-size:11px;line-height:14px;font-family:'Liberation Sans',sans-serif;letter-spacing:-0.1px">44 454,17</span><span class="t" style="right:1093.6px;top:808.99px;font-size:11px;line-height:14px;font-family:'Liberation Sans',sans-serif;letter-spacing:-0.1px">296 677,29</span><span class="t" style="right:988.6px;top:808.99px;font-size:11px;line-height:14px;font-family:'Liberation Sans',sans-serif;letter-spacing:-0.1px">-1 325 349,03</span><span class="t" style="right:883.6px;top:808.99px;font-size:11px;line-height:14px;font-family:'Liberation Sans',sans-serif;letter-spacing:-0.1px">-100,00</span><span class="t" style="right:778.6px;top:808.99px;font-size:11px;line-height:14px;font-family:'Liberation Sans',sans-serif;letter-spacing:-0.1px">-96,75</span><div style="left:794px;top:314px;width:104px;height:16px;border:1px solid #000;box-sizing:border-box;"></div><div style="left:796px;top:316px;width:100px;height:12px;background:#c9d3ea;"></div><span class="t" style="right:988.6px;top:314.99px;font-size:11px;line-height:14px;font-family:'Liberation Sans',sans-serif;letter-spacing:-0.1px">580,00</span><div style="left:89px;top:7px;width:1019px;height:142px;background:#fff;"></div><div style="left:87px;top:5px;width:1022px;height:2px;background:#000;"></div><div style="left:268px;top:86px;width:841px;height:2px;background:#000;"></div><div style="left:268px;top:103px;width:841px;height:2px;background:#000;"></div><div style="left:87px;top:149px;width:1022px;height:2px;background:#000;"></div><div style="left:372px;top:105px;width:2px;height:44px;background:#000;"></div><div style="left:372px;top:151px;width:1px;height:700px;background:#000;"></div><div style="left:582px;top:105px;width:2px;height:44px;background:#000;"></div><div style="left:582px;top:151px;width:1px;height:700px;background:#000;"></div><div style="left:792px;top:105px;width:2px;height:44px;background:#000;"></div><div style="left:792px;top:151px;width:1px;height:700px;background:#000;"></div><div style="left:1002px;top:105px;width:2px;height:44px;background:#000;"></div><div style="left:1002px;top:151px;width:1px;height:700px;background:#000;"></div><div style="left:687px;top:88px;width:2px;height:800px;background:#000;"></div><div style="left:897px;top:88px;width:2px;height:800px;background:#000;"></div><div style="left:87px;top:5px;width:2px;height:900px;background:#000;"></div><div style="left:267px;top:5px;width:2px;height:900px;background:#000;"></div><div style="left:477px;top:5px;width:2px;height:900px;background:#000;"></div><div style="left:1107px;top:5px;width:2px;height:900px;background:#000;"></div><span class="t" style="top:5.38px;font-size:13.33px;line-height:17px;color:#000;font-family:'Liberation Sans',sans-serif;font-weight:bold;letter-spacing:-0.163px;left:309.8px;-webkit-text-stroke:0.3px #000;">Эталонный период.</span><span class="t" style="top:21.38px;font-size:13.33px;line-height:17px;color:#000;font-family:'Liberation Sans',sans-serif;font-weight:bold;letter-spacing:-0.290px;left:283.7px;-webkit-text-stroke:0.3px #000;">Нормальный (Месяц)(RUB)</span><span class="t" style="top:37.38px;font-size:13.33px;line-height:17px;color:#000;font-family:'Liberation Sans',sans-serif;font-weight:bold;letter-spacing:-0.156px;left:349.5px;-webkit-text-stroke:0.3px #000;">Месяц.</span><span class="t" style="top:53.38px;font-size:13.33px;line-height:17px;color:#000;font-family:'Liberation Sans',sans-serif;font-weight:bold;letter-spacing:-0.203px;left:296.5px;-webkit-text-stroke:0.3px #000;">Период с 01.04.2013 по</span><span class="t" style="top:69.38px;font-size:13.33px;line-height:17px;color:#000;font-family:'Liberation Sans',sans-serif;font-weight:bold;letter-spacing:-0.332px;left:339.8px;-webkit-text-stroke:0.3px #000;">30.04.2013</span><span class="t" style="top:22.08px;font-size:13.33px;line-height:17px;color:#000;font-family:'Liberation Sans',sans-serif;font-weight:bold;letter-spacing:-0.049px;left:708.3px;-webkit-text-stroke:0.3px #000;">Сравниваемый период 1.</span><span class="t" style="top:38.08px;font-size:13.33px;line-height:17px;color:#000;font-family:'Liberation Sans',sans-serif;font-weight:bold;letter-spacing:0.098px;left:695px;-webkit-text-stroke:0.3px #000;">Фактические данные. Месяц.</span><span class="t" style="top:54.08px;font-size:13.33px;line-height:17px;color:#000;font-family:'Liberation Sans',sans-serif;font-weight:bold;letter-spacing:-0.179px;left:684px;-webkit-text-stroke:0.3px #000;">Период с 01.04.2013 по 30.04.2013</span><span class="t" style="top:68.88px;font-size:13.33px;line-height:17px;color:#000;font-family:'Liberation Sans',sans-serif;font-weight:bold;letter-spacing:-0.369px;left:140.7px;-webkit-text-stroke:0.3px #000;">Общий итог</span><span class="t" style="top:87.34px;font-size:12px;line-height:16px;color:#000;font-family:'Liberation Sans',sans-serif;font-weight:bold;letter-spacing:0.171px;left:354.3px;-webkit-text-stroke:0.3px #000;">Итого</span><span class="t" style="top:87.34px;font-size:12px;line-height:16px;color:#000;font-family:'Liberation Sans',sans-serif;font-weight:bold;letter-spacing:0.171px;left:564.5px;-webkit-text-stroke:0.3px #000;">Итого</span><span class="t" style="top:87.34px;font-size:12px;line-height:16px;color:#000;font-family:'Liberation Sans',sans-serif;font-weight:bold;letter-spacing:0.663px;left:735.7px;-webkit-text-stroke:0.3px #000;">Отклонение, абс.</span><span class="t" style="top:87.34px;font-size:12px;line-height:16px;color:#000;font-family:'Liberation Sans',sans-serif;font-weight:bold;letter-spacing:0.560px;left:954.7px;-webkit-text-stroke:0.3px #000;">Отклонение, %</span><span class="t" style="top:103.64px;font-size:12px;line-height:16px;color:#000;font-family:'Liberation Sans',sans-serif;font-weight:bold;letter-spacing:-0.234px;left:275px;-webkit-text-stroke:0.3px #000;">Поступления в</span><span class="t" style="top:118.64px;font-size:12px;line-height:16px;color:#000;font-family:'Liberation Sans',sans-serif;font-weight:bold;letter-spacing:-0.231px;left:282.7px;-webkit-text-stroke:0.3px #000;">валюте упр.</span><span class="t" style="top:133.84px;font-size:12px;line-height:16px;color:#000;font-family:'Liberation Sans',sans-serif;font-weight:bold;letter-spacing:-0.084px;left:302.7px;-webkit-text-stroke:0.3px #000;">учета</span><span class="t" style="top:103.64px;font-size:12px;line-height:16px;color:#000;font-family:'Liberation Sans',sans-serif;font-weight:bold;letter-spacing:-0.025px;left:391.6px;-webkit-text-stroke:0.3px #000;">Платежи в</span><span class="t" style="top:118.64px;font-size:12px;line-height:16px;color:#000;font-family:'Liberation Sans',sans-serif;font-weight:bold;letter-spacing:-0.231px;left:387.7px;-webkit-text-stroke:0.3px #000;">валюте упр.</span><span class="t" style="top:133.84px;font-size:12px;line-height:16px;color:#000;font-family:'Liberation Sans',sans-serif;font-weight:bold;letter-spacing:-0.084px;left:407.7px;-webkit-text-stroke:0.3px #000;">учета</span><span class="t" style="top:103.64px;font-size:12px;line-height:16px;color:#000;font-family:'Liberation Sans',sans-serif;font-weight:bold;letter-spacing:-0.234px;left:485px;-webkit-text-stroke:0.3px #000;">Поступления в</span><span class="t" style="top:118.64px;font-size:12px;line-height:16px;color:#000;font-family:'Liberation Sans',sans-serif;font-weight:bold;letter-spacing:-0.231px;left:492.7px;-webkit-text-stroke:0.3px #000;">валюте упр.</span><span class="t" style="top:133.84px;font-size:12px;line-height:16px;color:#000;font-family:'Liberation Sans',sans-serif;font-weight:bold;letter-spacing:-0.084px;left:512.7px;-webkit-text-stroke:0.3px #000;">учета</span><span class="t" style="top:103.64px;font-size:12px;line-height:16px;color:#000;font-family:'Liberation Sans',sans-serif;font-weight:bold;letter-spacing:-0.025px;left:601.6px;-webkit-text-stroke:0.3px #000;">Платежи в</span><span class="t" style="top:118.64px;font-size:12px;line-height:16px;color:#000;font-family:'Liberation Sans',sans-serif;font-weight:bold;letter-spacing:-0.231px;left:597.7px;-webkit-text-stroke:0.3px #000;">валюте упр.</span><span class="t" style="top:133.84px;font-size:12px;line-height:16px;color:#000;font-family:'Liberation Sans',sans-serif;font-weight:bold;letter-spacing:-0.084px;left:617.7px;-webkit-text-stroke:0.3px #000;">учета</span><span class="t" style="top:103.64px;font-size:12px;line-height:16px;color:#000;font-family:'Liberation Sans',sans-serif;font-weight:bold;letter-spacing:-0.234px;left:695px;-webkit-text-stroke:0.3px #000;">Поступления в</span><span class="t" style="top:118.64px;font-size:12px;line-height:16px;color:#000;font-family:'Liberation Sans',sans-serif;font-weight:bold;letter-spacing:-0.231px;left:702.7px;-webkit-text-stroke:0.3px #000;">валюте упр.</span><span class="t" style="top:133.84px;font-size:12px;line-height:16px;color:#000;font-family:'Liberation Sans',sans-serif;font-weight:bold;letter-spacing:-0.084px;left:722.7px;-webkit-text-stroke:0.3px #000;">учета</span><span class="t" style="top:103.64px;font-size:12px;line-height:16px;color:#000;font-family:'Liberation Sans',sans-serif;font-weight:bold;letter-spacing:-0.025px;left:811.6px;-webkit-text-stroke:0.3px #000;">Платежи в</span><span class="t" style="top:118.64px;font-size:12px;line-height:16px;color:#000;font-family:'Liberation Sans',sans-serif;font-weight:bold;letter-spacing:-0.231px;left:807.7px;-webkit-text-stroke:0.3px #000;">валюте упр.</span><span class="t" style="top:133.84px;font-size:12px;line-height:16px;color:#000;font-family:'Liberation Sans',sans-serif;font-weight:bold;letter-spacing:-0.084px;left:827.7px;-webkit-text-stroke:0.3px #000;">учета</span><span class="t" style="top:103.64px;font-size:12px;line-height:16px;color:#000;font-family:'Liberation Sans',sans-serif;font-weight:bold;letter-spacing:-0.234px;left:905px;-webkit-text-stroke:0.3px #000;">Поступления в</span><span class="t" style="top:118.64px;font-size:12px;line-height:16px;color:#000;font-family:'Liberation Sans',sans-serif;font-weight:bold;letter-spacing:-0.231px;left:912.7px;-webkit-text-stroke:0.3px #000;">валюте упр.</span><span class="t" style="top:133.84px;font-size:12px;line-height:16px;color:#000;font-family:'Liberation Sans',sans-serif;font-weight:bold;letter-spacing:-0.084px;left:932.7px;-webkit-text-stroke:0.3px #000;">учета</span><span class="t" style="top:103.64px;font-size:12px;line-height:16px;color:#000;font-family:'Liberation Sans',sans-serif;font-weight:bold;letter-spacing:-0.025px;left:1021.5999999999999px;-webkit-text-stroke:0.3px #000;">Платежи в</span><span class="t" style="top:118.64px;font-size:12px;line-height:16px;color:#000;font-family:'Liberation Sans',sans-serif;font-weight:bold;letter-spacing:-0.231px;left:1017.7px;-webkit-text-stroke:0.3px #000;">валюте упр.</span><span class="t" style="top:133.84px;font-size:12px;line-height:16px;color:#000;font-family:'Liberation Sans',sans-serif;font-weight:bold;letter-spacing:-0.084px;left:1037.7px;-webkit-text-stroke:0.3px #000;">учета</span><svg class="a" style="left:3px;top:152px" width="11" height="11" viewBox="0 0 11 11"><rect x="0.5" y="0.5" width="10" height="10" rx="1" fill="#fffefb" stroke="#b9b293"/><path d="M2.5 5.5h6" stroke="#3b2f0f" stroke-width="1"/></svg><div style="left:8px;top:163px;width:1px;height:688px;background:#c3bda0;"></div><div style="left:8px;top:851px;width:5px;height:1px;background:#c3bda0;"></div><svg class="a" style="left:16px;top:167px" width="11" height="11" viewBox="0 0 11 11"><rect x="0.5" y="0.5" width="10" height="10" rx="1" fill="#fffefb" stroke="#b9b293"/><path d="M2.5 5.5h6" stroke="#3b2f0f" stroke-width="1"/></svg><div style="left:21px;top:178px;width:1px;height:673px;background:#c3bda0;"></div><div style="left:21px;top:851px;width:5px;height:1px;background:#c3bda0;"></div><svg class="a" style="left:29px;top:182px" width="11" height="11" viewBox="0 0 11 11"><rect x="0.5" y="0.5" width="10" height="10" rx="1" fill="#fffefb" stroke="#b9b293"/><path d="M2.5 5.5h6" stroke="#3b2f0f" stroke-width="1"/></svg><div style="left:34px;top:193px;width:1px;height:299px;background:#c3bda0;"></div><div style="left:34px;top:492px;width:5px;height:1px;background:#c3bda0;"></div><svg class="a" style="left:42px;top:197px" width="11" height="11" viewBox="0 0 11 11"><rect x="0.5" y="0.5" width="10" height="10" rx="1" fill="#fffefb" stroke="#b9b293"/><path d="M2.5 5.5h6" stroke="#3b2f0f" stroke-width="1"/></svg><div style="left:47px;top:208px;width:1px;height:284px;background:#c3bda0;"></div><div style="left:47px;top:492px;width:5px;height:1px;background:#c3bda0;"></div><svg class="a" style="left:55px;top:212px" width="11" height="11" viewBox="0 0 11 11"><rect x="0.5" y="0.5" width="10" height="10" rx="1" fill="#fffefb" stroke="#b9b293"/><path d="M2.5 5.5h6" stroke="#3b2f0f" stroke-width="1"/></svg><div style="left:60px;top:223px;width:1px;height:30px;background:#c3bda0;"></div><div style="left:60px;top:253px;width:5px;height:1px;background:#c3bda0;"></div><svg class="a" style="left:55px;top:257px" width="11" height="11" viewBox="0 0 11 11"><rect x="0.5" y="0.5" width="10" height="10" rx="1" fill="#fffefb" stroke="#b9b293"/><path d="M2.5 5.5h6" stroke="#3b2f0f" stroke-width="1"/><path d="M5.5 2.5v6" stroke="#3b2f0f" stroke-width="1"/></svg><svg class="a" style="left:55px;top:272px" width="11" height="11" viewBox="0 0 11 11"><rect x="0.5" y="0.5" width="10" height="10" rx="1" fill="#fffefb" stroke="#b9b293"/><path d="M2.5 5.5h6" stroke="#3b2f0f" stroke-width="1"/><path d="M5.5 2.5v6" stroke="#3b2f0f" stroke-width="1"/></svg><svg class="a" style="left:55px;top:287px" width="11" height="11" viewBox="0 0 11 11"><rect x="0.5" y="0.5" width="10" height="10" rx="1" fill="#fffefb" stroke="#b9b293"/><path d="M2.5 5.5h6" stroke="#3b2f0f" stroke-width="1"/><path d="M5.5 2.5v6" stroke="#3b2f0f" stroke-width="1"/></svg><svg class="a" style="left:55px;top:302px" width="11" height="11" viewBox="0 0 11 11"><rect x="0.5" y="0.5" width="10" height="10" rx="1" fill="#fffefb" stroke="#b9b293"/><path d="M2.5 5.5h6" stroke="#3b2f0f" stroke-width="1"/><path d="M5.5 2.5v6" stroke="#3b2f0f" stroke-width="1"/></svg><svg class="a" style="left:55px;top:317px" width="11" height="11" viewBox="0 0 11 11"><rect x="0.5" y="0.5" width="10" height="10" rx="1" fill="#fffefb" stroke="#b9b293"/><path d="M2.5 5.5h6" stroke="#3b2f0f" stroke-width="1"/><path d="M5.5 2.5v6" stroke="#3b2f0f" stroke-width="1"/></svg><svg class="a" style="left:55px;top:332px" width="11" height="11" viewBox="0 0 11 11"><rect x="0.5" y="0.5" width="10" height="10" rx="1" fill="#fffefb" stroke="#b9b293"/><path d="M2.5 5.5h6" stroke="#3b2f0f" stroke-width="1"/><path d="M5.5 2.5v6" stroke="#3b2f0f" stroke-width="1"/></svg><svg class="a" style="left:55px;top:347px" width="11" height="11" viewBox="0 0 11 11"><rect x="0.5" y="0.5" width="10" height="10" rx="1" fill="#fffefb" stroke="#b9b293"/><path d="M2.5 5.5h6" stroke="#3b2f0f" stroke-width="1"/><path d="M5.5 2.5v6" stroke="#3b2f0f" stroke-width="1"/></svg><svg class="a" style="left:55px;top:362px" width="11" height="11" viewBox="0 0 11 11"><rect x="0.5" y="0.5" width="10" height="10" rx="1" fill="#fffefb" stroke="#b9b293"/><path d="M2.5 5.5h6" stroke="#3b2f0f" stroke-width="1"/><path d="M5.5 2.5v6" stroke="#3b2f0f" stroke-width="1"/></svg><svg class="a" style="left:55px;top:377px" width="11" height="11" viewBox="0 0 11 11"><rect x="0.5" y="0.5" width="10" height="10" rx="1" fill="#fffefb" stroke="#b9b293"/><path d="M2.5 5.5h6" stroke="#3b2f0f" stroke-width="1"/><path d="M5.5 2.5v6" stroke="#3b2f0f" stroke-width="1"/></svg><svg class="a" style="left:55px;top:392px" width="11" height="11" viewBox="0 0 11 11"><rect x="0.5" y="0.5" width="10" height="10" rx="1" fill="#fffefb" stroke="#b9b293"/><path d="M2.5 5.5h6" stroke="#3b2f0f" stroke-width="1"/><path d="M5.5 2.5v6" stroke="#3b2f0f" stroke-width="1"/></svg><svg class="a" style="left:55px;top:407px" width="11" height="11" viewBox="0 0 11 11"><rect x="0.5" y="0.5" width="10" height="10" rx="1" fill="#fffefb" stroke="#b9b293"/><path d="M2.5 5.5h6" stroke="#3b2f0f" stroke-width="1"/><path d="M5.5 2.5v6" stroke="#3b2f0f" stroke-width="1"/></svg><svg class="a" style="left:55px;top:422px" width="11" height="11" viewBox="0 0 11 11"><rect x="0.5" y="0.5" width="10" height="10" rx="1" fill="#fffefb" stroke="#b9b293"/><path d="M2.5 5.5h6" stroke="#3b2f0f" stroke-width="1"/><path d="M5.5 2.5v6" stroke="#3b2f0f" stroke-width="1"/></svg><svg class="a" style="left:55px;top:437px" width="11" height="11" viewBox="0 0 11 11"><rect x="0.5" y="0.5" width="10" height="10" rx="1" fill="#fffefb" stroke="#b9b293"/><path d="M2.5 5.5h6" stroke="#3b2f0f" stroke-width="1"/><path d="M5.5 2.5v6" stroke="#3b2f0f" stroke-width="1"/></svg><svg class="a" style="left:55px;top:452px" width="11" height="11" viewBox="0 0 11 11"><rect x="0.5" y="0.5" width="10" height="10" rx="1" fill="#fffefb" stroke="#b9b293"/><path d="M2.5 5.5h6" stroke="#3b2f0f" stroke-width="1"/><path d="M5.5 2.5v6" stroke="#3b2f0f" stroke-width="1"/></svg><svg class="a" style="left:55px;top:474px" width="11" height="11" viewBox="0 0 11 11"><rect x="0.5" y="0.5" width="10" height="10" rx="1" fill="#fffefb" stroke="#b9b293"/><path d="M2.5 5.5h6" stroke="#3b2f0f" stroke-width="1"/><path d="M5.5 2.5v6" stroke="#3b2f0f" stroke-width="1"/></svg><svg class="a" style="left:29px;top:496px" width="11" height="11" viewBox="0 0 11 11"><rect x="0.5" y="0.5" width="10" height="10" rx="1" fill="#fffefb" stroke="#b9b293"/><path d="M2.5 5.5h6" stroke="#3b2f0f" stroke-width="1"/></svg><div style="left:34px;top:507px;width:1px;height:285px;background:#c3bda0;"></div><div style="left:34px;top:792px;width:5px;height:1px;background:#c3bda0;"></div><svg class="a" style="left:42px;top:511px" width="11" height="11" viewBox="0 0 11 11"><rect x="0.5" y="0.5" width="10" height="10" rx="1" fill="#fffefb" stroke="#b9b293"/><path d="M2.5 5.5h6" stroke="#3b2f0f" stroke-width="1"/></svg><div style="left:47px;top:522px;width:1px;height:15px;background:#c3bda0;"></div><div style="left:47px;top:537px;width:5px;height:1px;background:#c3bda0;"></div><svg class="a" style="left:55px;top:526px" width="11" height="11" viewBox="0 0 11 11"><rect x="0.5" y="0.5" width="10" height="10" rx="1" fill="#fffefb" stroke="#b9b293"/><path d="M2.5 5.5h6" stroke="#3b2f0f" stroke-width="1"/><path d="M5.5 2.5v6" stroke="#3b2f0f" stroke-width="1"/></svg><svg class="a" style="left:42px;top:541px" width="11" height="11" viewBox="0 0 11 11"><rect x="0.5" y="0.5" width="10" height="10" rx="1" fill="#fffefb" stroke="#b9b293"/><path d="M2.5 5.5h6" stroke="#3b2f0f" stroke-width="1"/></svg><div style="left:47px;top:552px;width:1px;height:240px;background:#c3bda0;"></div><div style="left:47px;top:792px;width:5px;height:1px;background:#c3bda0;"></div><svg class="a" style="left:55px;top:556px" width="11" height="11" viewBox="0 0 11 11"><rect x="0.5" y="0.5" width="10" height="10" rx="1" fill="#fffefb" stroke="#b9b293"/><path d="M2.5 5.5h6" stroke="#3b2f0f" stroke-width="1"/><path d="M5.5 2.5v6" stroke="#3b2f0f" stroke-width="1"/></svg><svg class="a" style="left:55px;top:571px" width="11" height="11" viewBox="0 0 11 11"><rect x="0.5" y="0.5" width="10" height="10" rx="1" fill="#fffefb" stroke="#b9b293"/><path d="M2.5 5.5h6" stroke="#3b2f0f" stroke-width="1"/><path d="M5.5 2.5v6" stroke="#3b2f0f" stroke-width="1"/></svg><svg class="a" style="left:55px;top:586px" width="11" height="11" viewBox="0 0 11 11"><rect x="0.5" y="0.5" width="10" height="10" rx="1" fill="#fffefb" stroke="#b9b293"/><path d="M2.5 5.5h6" stroke="#3b2f0f" stroke-width="1"/><path d="M5.5 2.5v6" stroke="#3b2f0f" stroke-width="1"/></svg><svg class="a" style="left:55px;top:601px" width="11" height="11" viewBox="0 0 11 11"><rect x="0.5" y="0.5" width="10" height="10" rx="1" fill="#fffefb" stroke="#b9b293"/><path d="M2.5 5.5h6" stroke="#3b2f0f" stroke-width="1"/><path d="M5.5 2.5v6" stroke="#3b2f0f" stroke-width="1"/></svg><svg class="a" style="left:55px;top:616px" width="11" height="11" viewBox="0 0 11 11"><rect x="0.5" y="0.5" width="10" height="10" rx="1" fill="#fffefb" stroke="#b9b293"/><path d="M2.5 5.5h6" stroke="#3b2f0f" stroke-width="1"/><path d="M5.5 2.5v6" stroke="#3b2f0f" stroke-width="1"/></svg><svg class="a" style="left:55px;top:631px" width="11" height="11" viewBox="0 0 11 11"><rect x="0.5" y="0.5" width="10" height="10" rx="1" fill="#fffefb" stroke="#b9b293"/><path d="M2.5 5.5h6" stroke="#3b2f0f" stroke-width="1"/><path d="M5.5 2.5v6" stroke="#3b2f0f" stroke-width="1"/></svg><svg class="a" style="left:55px;top:646px" width="11" height="11" viewBox="0 0 11 11"><rect x="0.5" y="0.5" width="10" height="10" rx="1" fill="#fffefb" stroke="#b9b293"/><path d="M2.5 5.5h6" stroke="#3b2f0f" stroke-width="1"/><path d="M5.5 2.5v6" stroke="#3b2f0f" stroke-width="1"/></svg><svg class="a" style="left:55px;top:661px" width="11" height="11" viewBox="0 0 11 11"><rect x="0.5" y="0.5" width="10" height="10" rx="1" fill="#fffefb" stroke="#b9b293"/><path d="M2.5 5.5h6" stroke="#3b2f0f" stroke-width="1"/><path d="M5.5 2.5v6" stroke="#3b2f0f" stroke-width="1"/></svg><svg class="a" style="left:55px;top:676px" width="11" height="11" viewBox="0 0 11 11"><rect x="0.5" y="0.5" width="10" height="10" rx="1" fill="#fffefb" stroke="#b9b293"/><path d="M2.5 5.5h6" stroke="#3b2f0f" stroke-width="1"/><path d="M5.5 2.5v6" stroke="#3b2f0f" stroke-width="1"/></svg><svg class="a" style="left:55px;top:691px" width="11" height="11" viewBox="0 0 11 11"><rect x="0.5" y="0.5" width="10" height="10" rx="1" fill="#fffefb" stroke="#b9b293"/><path d="M2.5 5.5h6" stroke="#3b2f0f" stroke-width="1"/><path d="M5.5 2.5v6" stroke="#3b2f0f" stroke-width="1"/></svg><svg class="a" style="left:55px;top:706px" width="11" height="11" viewBox="0 0 11 11"><rect x="0.5" y="0.5" width="10" height="10" rx="1" fill="#fffefb" stroke="#b9b293"/><path d="M2.5 5.5h6" stroke="#3b2f0f" stroke-width="1"/><path d="M5.5 2.5v6" stroke="#3b2f0f" stroke-width="1"/></svg><svg class="a" style="left:55px;top:721px" width="11" height="11" viewBox="0 0 11 11"><rect x="0.5" y="0.5" width="10" height="10" rx="1" fill="#fffefb" stroke="#b9b293"/><path d="M2.5 5.5h6" stroke="#3b2f0f" stroke-width="1"/><path d="M5.5 2.5v6" stroke="#3b2f0f" stroke-width="1"/></svg><svg class="a" style="left:55px;top:736px" width="11" height="11" viewBox="0 0 11 11"><rect x="0.5" y="0.5" width="10" height="10" rx="1" fill="#fffefb" stroke="#b9b293"/><path d="M2.5 5.5h6" stroke="#3b2f0f" stroke-width="1"/><path d="M5.5 2.5v6" stroke="#3b2f0f" stroke-width="1"/></svg><svg class="a" style="left:55px;top:751px" width="11" height="11" viewBox="0 0 11 11"><rect x="0.5" y="0.5" width="10" height="10" rx="1" fill="#fffefb" stroke="#b9b293"/><path d="M2.5 5.5h6" stroke="#3b2f0f" stroke-width="1"/><path d="M5.5 2.5v6" stroke="#3b2f0f" stroke-width="1"/></svg><svg class="a" style="left:55px;top:766px" width="11" height="11" viewBox="0 0 11 11"><rect x="0.5" y="0.5" width="10" height="10" rx="1" fill="#fffefb" stroke="#b9b293"/><path d="M2.5 5.5h6" stroke="#3b2f0f" stroke-width="1"/><path d="M5.5 2.5v6" stroke="#3b2f0f" stroke-width="1"/></svg><svg class="a" style="left:55px;top:781px" width="11" height="11" viewBox="0 0 11 11"><rect x="0.5" y="0.5" width="10" height="10" rx="1" fill="#fffefb" stroke="#b9b293"/><path d="M2.5 5.5h6" stroke="#3b2f0f" stroke-width="1"/><path d="M5.5 2.5v6" stroke="#3b2f0f" stroke-width="1"/></svg><svg class="a" style="left:29px;top:796px" width="11" height="11" viewBox="0 0 11 11"><rect x="0.5" y="0.5" width="10" height="10" rx="1" fill="#fffefb" stroke="#b9b293"/><path d="M2.5 5.5h6" stroke="#3b2f0f" stroke-width="1"/></svg><div style="left:34px;top:807px;width:1px;height:44px;background:#c3bda0;"></div><div style="left:34px;top:851px;width:5px;height:1px;background:#c3bda0;"></div><svg class="a" style="left:42px;top:811px" width="11" height="11" viewBox="0 0 11 11"><rect x="0.5" y="0.5" width="10" height="10" rx="1" fill="#fffefb" stroke="#b9b293"/><path d="M2.5 5.5h6" stroke="#3b2f0f" stroke-width="1"/></svg><div style="left:47px;top:822px;width:1px;height:29px;background:#c3bda0;"></div><div style="left:47px;top:851px;width:5px;height:1px;background:#c3bda0;"></div></div><div style="left:11px;top:298px;width:1883px;height:1px;background:#b4b09a;"></div><div style="left:278px;top:149px;width:1px;height:818px;background:#a6a6a0;"></div><div style="left:91px;top:172px;width:195px;height:811px;border:3px solid #c8282f;box-sizing:border-box;"></div><div style="left:795px;top:222px;width:121px;height:740px;border:3px solid #c8282f;box-sizing:border-box;"></div><div style="left:120px;top:371px;width:816px;height:20px;border:3px solid #2a9f52;box-sizing:border-box;"></div><span class="t" style="top:180.27px;font-size:17.4px;line-height:23px;color:#d4303a;font-family:'Liberation Sans',sans-serif;font-weight:bold;letter-spacing:0.556px;left:130px;">1 колонка</span><span class="t" style="top:193.17px;font-size:17.4px;line-height:23px;color:#d4303a;font-family:'Liberation Sans',sans-serif;font-weight:bold;letter-spacing:0.578px;left:923.7px;">2 колонка</span><div style="left:1161px;top:319px;width:497px;height:413px;background:#cdcdcd;border-right:1px solid #8f8f8f;border-bottom:1px solid #8f8f8f;box-sizing:border-box;box-shadow:1px 1px 2px rgba(0,0,0,.18);"></div><div style="left:1164px;top:340px;width:490px;height:389px;background:#fdfbf4;"></div><svg class="a" style="left:1167px;top:324px" width="12" height="14" viewBox="0 0 12 14"><path d="M0.5 0.5h8l3 3v10h-11z" fill="#fff" stroke="#9a9a9a"/><path d="M8.5 0.5v3h3" fill="none" stroke="#b5b5b5"/><rect x="2" y="3.5" width="1.8" height="6" fill="#cf3b2e"/><rect x="4.5" y="4.5" width="1.8" height="5" fill="#d8622e"/><rect x="7" y="5.5" width="1.8" height="4" fill="#3f9a3a"/><path d="M1.5 10h8" stroke="#6a8ab8" stroke-width="0.8"/><path d="M1.5 11.8h8" stroke="#c4d0e4" stroke-width="0.8"/></svg><span class="t" style="top:323.92px;font-size:11.5px;line-height:15px;color:#2e2e2e;font-weight:bold;letter-spacing:-0.115px;left:1185.3px;">Сравнительный анализ движения денежных средств</span><svg class="a" style="left:1639px;top:326px" width="10" height="10" viewBox="0 0 10 10"><path d="M1 1L9 9M9 1L1 9" stroke="#222" stroke-width="2" fill="none"/></svg><div style="left:1172px;top:366px;width:474px;height:330px;background:#fdfbf4;border:1px solid #cdc5a3;box-sizing:border-box;"></div><div style="left:1172px;top:348px;width:55px;height:18px;background:linear-gradient(#f7f1dc,#efe6c6);border:1px solid #cdc5a3;border-bottom:none;border-radius:4px 4px 0 0;box-sizing:border-box;"></div><span class="t" style="top:352.09px;font-size:11px;line-height:14px;color:#2b2412;letter-spacing:-0.147px;left:1182.5px;">Общие</span><div style="left:1324px;top:348px;width:51px;height:18px;background:linear-gradient(#f7f1dc,#efe6c6);border:1px solid #cdc5a3;border-bottom:none;border-radius:4px 4px 0 0;box-sizing:border-box;"></div><span class="t" style="top:352.09px;font-size:11px;line-height:14px;color:#2b2412;letter-spacing:-0.200px;left:1334px;">Отбор</span><div style="left:1381px;top:348px;width:46px;height:18px;background:linear-gradient(#f7f1dc,#efe6c6);border:1px solid #cdc5a3;border-bottom:none;border-radius:4px 4px 0 0;box-sizing:border-box;"></div><span class="t" style="top:352.09px;font-size:11px;line-height:14px;color:#2b2412;letter-spacing:0.055px;left:1391.3px;">Поля</span><div style="left:1233px;top:347px;width:85px;height:20px;background:linear-gradient(#f9dca4,#fdf6e4 3px,#fdfbf4 6px);border:1px solid #cdc5a3;border-bottom:none;border-radius:4px 4px 0 0;box-sizing:border-box;border-top-color:#e6bf78;"></div><span class="t" style="top:352.09px;font-size:11px;line-height:14px;color:#2b2412;letter-spacing:-0.313px;left:1243.3px;">Группировки</span><svg class="a" style="left:1183px;top:371px" width="16" height="16" viewBox="0 0 16 16"><defs><radialGradient id="gpl" cx="40%" cy="30%" r="75%"><stop offset="0" stop-color="#c9efb0"/><stop offset="1" stop-color="#4fae3a"/></radialGradient></defs><circle cx="8" cy="8" r="7.4" fill="url(#gpl)" stroke="#7cb46a" stroke-width="0.8"/><path d="M8 4v8M4 8h8" stroke="#fff" stroke-width="2.4"/></svg><svg class="a" style="left:1207px;top:374px" width="12" height="11" viewBox="0 0 12 11"><path d="M1.5 1.5L10.5 9.5M10.5 1.5L1.5 9.5" stroke="#e4605a" stroke-width="2.6" stroke-linecap="round"/><path d="M2 2L10 9M10 2L2 9" stroke="#f29a90" stroke-width="0.9" stroke-linecap="round"/></svg><svg class="a" style="left:1230px;top:373px" width="13" height="13" viewBox="0 0 13 13"><path d="M6.5 0.5L12.5 6.5H9.5V12.5H3.5V6.5H0.5z" fill="#b3bdcf" stroke="#98a4ba" stroke-width="0.8"/></svg><svg class="a" style="left:1253px;top:373px" width="13" height="13" viewBox="0 0 13 13"><defs><linearGradient id="gdn" x1="0" y1="0" x2="0" y2="1"><stop offset="0" stop-color="#bfe0fa"/><stop offset="1" stop-color="#3f8ede"/></linearGradient></defs><path d="M6.5 12.5L12.5 6.5H9.5V0.5H3.5V6.5H0.5z" fill="url(#gdn)" stroke="#4a86cc" stroke-width="0.8"/></svg><div style="left:1179px;top:392px;width:460px;height:297px;background:#fff;border:1px solid #b7b294;box-sizing:border-box;"></div><div style="left:1180px;top:393px;width:458px;height:20px;background:linear-gradient(#fffdf6,#f8edd0);border-bottom:1px solid #c9c3a8;"></div><div style="left:1506px;top:393px;width:1px;height:116px;background:#d3d7df;"></div><div style="left:1506px;top:393px;width:1px;height:20px;background:#c9c3a8;"></div><span class="t" style="top:396.89px;font-size:11px;line-height:14px;color:#2b2412;letter-spacing:0.020px;left:1184px;">Поле</span><span class="t" style="top:396.89px;font-size:11px;line-height:14px;color:#2b2412;letter-spacing:0.016px;left:1511.6px;">Тип</span><div style="left:1180px;top:432px;width:458px;height:1px;background:#d3d7df;"></div><div style="left:1180px;top:414px;width:326px;height:18px;background:#4f66c6;outline:1px dotted #dfe6ff;outline-offset:-1px;"></div><span class="t" style="top:417.99px;font-size:11px;line-height:14px;color:#fff;letter-spacing:-0.297px;left:1184px;">Валюта движения</span><span class="t" style="top:417.99px;font-size:11px;line-height:14px;color:#000;letter-spacing:0.008px;left:1510.5px;">Элементы</span><div style="left:1180px;top:451px;width:458px;height:1px;background:#d3d7df;"></div><span class="t" style="top:436.99px;font-size:11px;line-height:14px;color:#000;letter-spacing:-0.256px;left:1184px;">Вид денежных средств (наличные, безналичные)</span><span class="t" style="top:436.99px;font-size:11px;line-height:14px;color:#000;letter-spacing:0.008px;left:1510.5px;">Элементы</span><div style="left:1180px;top:470px;width:458px;height:1px;background:#d3d7df;"></div><span class="t" style="top:455.99px;font-size:11px;line-height:14px;color:#000;letter-spacing:-0.177px;left:1184px;">Подразделение</span><span class="t" style="top:455.99px;font-size:11px;line-height:14px;color:#000;letter-spacing:0.008px;left:1510.5px;">Элементы</span><div style="left:1180px;top:489px;width:458px;height:1px;background:#d3d7df;"></div><span class="t" style="top:474.99px;font-size:11px;line-height:14px;color:#000;letter-spacing:-0.104px;left:1184px;">Проект</span><span class="t" style="top:474.99px;font-size:11px;line-height:14px;color:#000;letter-spacing:0.008px;left:1510.5px;">Элементы</span><div style="left:1180px;top:508px;width:458px;height:1px;background:#d3d7df;"></div><span class="t" style="top:493.99px;font-size:11px;line-height:14px;color:#000;letter-spacing:-0.279px;left:1184px;">Статья движения денежных средств</span><span class="t" style="top:493.99px;font-size:11px;line-height:14px;color:#000;letter-spacing:-0.045px;left:1510.5px;">Иерархия</span><div style="left:1164px;top:704px;width:490px;height:1px;background:#cfc8ad;"></div><div style="left:1164px;top:705px;width:490px;height:24px;background:#f8f2df;"></div><span class="t" style="top:711.19px;font-size:11px;line-height:14px;color:#2b2412;font-weight:bold;letter-spacing:0.453px;left:1545.5px;">OK</span><div style="left:1568px;top:707px;width:1px;height:20px;background:#cfc8ad;"></div><div style="left:1569px;top:707px;width:1px;height:20px;background:#fffdf3;"></div><span class="t" style="top:711.19px;font-size:11px;line-height:14px;color:#2b2412;letter-spacing:-0.085px;left:1576.6px;">Закрыть</span><div style="left:1626px;top:707px;width:1px;height:20px;background:#cfc8ad;"></div><div style="left:1627px;top:707px;width:1px;height:20px;background:#fffdf3;"></div><svg class="a" style="left:1633px;top:709px" width="16" height="16" viewBox="0 0 16 16"><circle cx="8" cy="8" r="7.3" fill="#f6c98a" stroke="#c9924a" stroke-width="0.9"/><ellipse cx="7" cy="5" rx="5" ry="3.3" fill="#fde6c4" opacity="0.8"/><text x="8" y="12" font-size="11" font-weight="bold" font-family="Liberation Sans,sans-serif" text-anchor="middle" fill="#6a4218">?</text></svg><div style="left:0px;top:992px;width:1920px;height:45px;background:#f8f2df;"></div><div style="left:1px;top:994px;width:171px;height:20px;background:#b6b4b7;border:1px solid #aaa8ab;box-sizing:border-box;"></div><svg class="a" style="left:5px;top:997px" width="12" height="14" viewBox="0 0 12 14"><rect x="0.5" y="0.5" width="11" height="13" fill="#fff" stroke="#8e949e"/><path d="M2.5 3.5h7M2.5 5.5h7M2.5 7.5h7M2.5 9.5h7" stroke="#c3c9d3"/></svg><span class="t" style="top:998.49px;font-size:11px;line-height:14px;color:#1c1c1c;letter-spacing:-0.322px;left:20px;">Планы движения денежных...</span><div style="left:174px;top:994px;width:171px;height:20px;background:#b6b4b7;border:1px solid #aaa8ab;box-sizing:border-box;"></div><svg class="a" style="left:178px;top:998px" width="13" height="12" viewBox="0 0 13 12"><rect x="0.5" y="0.5" width="12" height="11" fill="#fff" stroke="#a6a690"/><rect x="1" y="1" width="11" height="2.5" fill="#ecdf9c"/><path d="M4.5 0.5v11M8.5 0.5v11" stroke="#9a9a84"/></svg><span class="t" style="top:998.49px;font-size:11px;line-height:14px;color:#1c1c1c;letter-spacing:-0.234px;left:194px;">Дополнительные внешние ...</span><div style="left:347px;top:994px;width:172px;height:20px;background:#b9d1ec;border:1px solid #a4bfe0;box-sizing:border-box;"></div><svg class="a" style="left:352px;top:997px" width="12" height="14" viewBox="0 0 12 14"><path d="M0.5 0.5h8l3 3v10h-11z" fill="#fff" stroke="#9a9a9a"/><path d="M8.5 0.5v3h3" fill="none" stroke="#b5b5b5"/><rect x="2" y="3.5" width="1.8" height="6" fill="#cf3b2e"/><rect x="4.5" y="4.5" width="1.8" height="5" fill="#d8622e"/><rect x="7" y="5.5" width="1.8" height="4" fill="#3f9a3a"/><path d="M1.5 10h8" stroke="#6a8ab8" stroke-width="0.8"/><path d="M1.5 11.8h8" stroke="#c4d0e4" stroke-width="0.8"/></svg><span class="t" style="top:998.49px;font-size:11px;line-height:14px;color:#1c1c22;letter-spacing:-0.229px;left:366px;">Сравнительный анализ дви...</span><div style="left:520px;top:994px;width:171px;height:20px;background:#b6b4b7;border:1px solid #aaa8ab;box-sizing:border-box;"></div><svg class="a" style="left:524px;top:998px" width="13" height="12" viewBox="0 0 13 12"><rect x="0.5" y="0.5" width="12" height="11" fill="#fff" stroke="#a6a690"/><rect x="1" y="1" width="11" height="2.5" fill="#ecdf9c"/><path d="M4.5 0.5v11M8.5 0.5v11" stroke="#9a9a84"/></svg><span class="t" style="top:998.49px;font-size:11px;line-height:14px;color:#1c1c1c;letter-spacing:-0.236px;left:540px;">Дополнительные печатные...</span><div style="left:693px;top:994px;width:172px;height:20px;background:#b6b4b7;border:1px solid #aaa8ab;box-sizing:border-box;"></div><svg class="a" style="left:698px;top:997px" width="12" height="14" viewBox="0 0 12 14"><path d="M0.5 0.5h8l3 3v10h-11z" fill="#fff" stroke="#9a9a9a"/><path d="M8.5 0.5v3h3" fill="none" stroke="#b5b5b5"/><rect x="2" y="3.5" width="1.8" height="6" fill="#cf3b2e"/><rect x="4.5" y="4.5" width="1.8" height="5" fill="#d8622e"/><rect x="7" y="5.5" width="1.8" height="4" fill="#3f9a3a"/><path d="M1.5 10h8" stroke="#6a8ab8" stroke-width="0.8"/><path d="M1.5 11.8h8" stroke="#c4d0e4" stroke-width="0.8"/></svg><span class="t" style="top:998.49px;font-size:11px;line-height:14px;color:#1c1c1c;letter-spacing:-0.210px;left:712px;">Платежный календарь (Ма...</span><div style="left:0px;top:1016px;width:1849px;height:19px;background:#f8f2df;border:1px solid #e6dfc6;border-bottom-color:#fffdf5;border-right-color:#fffdf5;box-sizing:border-box;"></div><span class="t" style="top:1020.19px;font-size:11px;line-height:14px;color:#2b2412;letter-spacing:-0.229px;left:4.5px;">Для получения подсказки нажмите F1</span><div style="left:1853px;top:1016px;width:29px;height:19px;background:#f8f2df;border:1px solid #e6dfc6;border-bottom-color:#fffdf5;border-right-color:#fffdf5;box-sizing:border-box;"></div><div style="left:1887px;top:1016px;width:31px;height:19px;background:#f8f2df;border:1px solid #e6dfc6;border-bottom-color:#fffdf5;border-right-color:#fffdf5;box-sizing:border-box;"></div><span class="t" style="top:1020.19px;font-size:11px;line-height:14px;color:#b5ad85;letter-spacing:0.448px;left:1857px;">CAP</span><span class="t" style="top:1020.19px;font-size:11px;line-height:14px;color:#2b2412;letter-spacing:0.271px;left:1891px;">NUM</span><div style="left:0px;top:1037px;width:1920px;height:43px;background:#d4d0c8;border-top:1px solid #fff;box-sizing:border-box;"></div><div style="left:2px;top:1040px;width:52px;height:37px;background:#d4d0c8;border:1px solid;border-color:#fff #404040 #404040 #fff;box-shadow:inset -1px -1px 0 #808080;box-sizing:border-box;"></div><svg class="a" style="left:4px;top:1050px" width="17" height="15" viewBox="0 0 17 15"><path d="M2.5 2.2C5 0.4 6.8 0.6 8.6 1.8L7.4 7C5.4 5.8 3.8 5.8 1.2 7.4z" fill="#e8542a"/><path d="M9.6 2.2C11.6 3.4 13.4 3.2 16 1.4L14.8 6.6C12.2 8.4 10.4 8.4 8.4 7.4z" fill="#6cb83c"/><path d="M1 8.4C3.6 6.8 5.2 6.8 7.2 8L6 13.2C4 12 2.4 12 -0.2 13.6z" fill="#3c80dc"/><path d="M8.2 8.4C10.2 9.4 12 9.4 14.6 7.6L13.4 12.8C10.8 14.6 9 14.6 7 13.6z" fill="#f4c41c"/></svg><span class="t" style="top:1052.52px;font-size:11.5px;line-height:15px;color:#000;font-weight:bold;letter-spacing:-0.141px;left:20.5px;">Пуск</span><div style="left:61px;top:1042px;width:1px;height:33px;background:#808080;"></div><div style="left:62px;top:1042px;width:1px;height:33px;background:#fff;"></div><svg class="a" style="left:81px;top:1043px" width="30" height="32" viewBox="0 0 30 32"><defs><linearGradient id="gsv" x1="0" x2="1"><stop offset="0" stop-color="#d4d8de"/><stop offset="1" stop-color="#7f8690"/></linearGradient><linearGradient id="gtb" x1="0" y1="0" x2="0" y2="1"><stop offset="0" stop-color="#b4bcc8"/><stop offset="1" stop-color="#66707e"/></linearGradient></defs><path d="M2 1.5h9v21h-9z" fill="#c9cdd4" stroke="#8a9098"/><path d="M3 4h7M3 6.5h7M3 9h7M3 11.5h7M3 14h7" stroke="#7a8088" stroke-width="1.1"/><path d="M11 1.5l8 1.5v19h-8z" fill="url(#gsv)" stroke="#7a8088"/><path d="M11 17c0-4 9-4 9 0" fill="none" stroke="#555c66" stroke-width="1.6"/><path d="M5 16.5l16-0.5l7 4v10l-7 0.5l-16-1z" fill="url(#gtb)" stroke="#555c66"/><path d="M21 16.2v14" stroke="#555c66"/><rect x="8.5" y="20" width="2.2" height="4" fill="#e0e4ea" stroke="#555c66" stroke-width="0.6"/><rect x="15.5" y="20" width="2.2" height="4" fill="#e0e4ea" stroke="#555c66" stroke-width="0.6"/></svg><svg class="a" style="left:132px;top:1048px" width="28" height="22" viewBox="0 0 28 22"><defs><linearGradient id="gps" x1="0" y1="0" x2="0" y2="1"><stop offset="0" stop-color="#5fa8ea"/><stop offset="1" stop-color="#1f66b4"/></linearGradient></defs><path d="M5.5 1h21.5l-5 20h-21.5z" fill="url(#gps)" stroke="#2a6cb4" stroke-linejoin="round"/><path d="M8 6l6 5l-8 5" fill="none" stroke="#fff" stroke-width="2.2"/><path d="M13 16.5h6" stroke="#fff" stroke-width="2"/></svg><div style="left:171px;top:1040px;width:160px;height:37px;background:#d4d0c8;border:1px solid;border-color:#fff #404040 #404040 #fff;box-shadow:inset -1px -1px 0 #808080;box-sizing:border-box;"></div><span class="t" style="top:1052.52px;font-size:11.5px;line-height:15px;color:#000;letter-spacing:-0.345px;left:210px;">Внешние печатные ...</span><svg class="a" style="left:176px;top:1043px" width="26" height="32" viewBox="0 0 26 32"><path d="M1.5 4l8-3v29l-8-3z" fill="#f1dc8e" stroke="#d6bc62"/><path d="M9.5 1l9 4v24l-9 1z" fill="#faf0c0" stroke="#d6bc62"/><path d="M12.5 3.5l9 3v23l-9 0.5z" fill="#f4e4a2" stroke="#d6bc62"/></svg><svg class="a" style="left:343px;top:1044.5px" width="28" height="28" viewBox="0 0 28 28"><defs><radialGradient id="g1cb" cx="42%" cy="28%" r="78%"><stop offset="0" stop-color="#fffcd8"/><stop offset="0.5" stop-color="#fcdc4a"/><stop offset="1" stop-color="#ec9c12"/></radialGradient></defs><circle cx="14" cy="14" r="13.7" fill="url(#g1cb)"/><path d="M4 11.4L8.3 9.2V19.8" fill="none" stroke="#dc2a1c" stroke-width="2.8"/><path d="M19.6 10.9A5.4 5.4 0 1 0 15.8 19.9H27.3" fill="none" stroke="#dc2a1c" stroke-width="2.8"/><path d="M17.8 13.2A2.3 2.3 0 1 0 15.9 16.6H27.3" fill="none" stroke="#dc2a1c" stroke-width="1.5"/><path d="M4 11.4L8.3 9.2V19.8" fill="none" stroke="#f9b43a" stroke-width="0.7"/><path d="M19.6 10.9A5.4 5.4 0 1 0 15.8 19.9H27.3" fill="none" stroke="#f9b43a" stroke-width="0.7"/></svg><div style="left:383px;top:1040px;width:159px;height:37px;background:#d4d0c8;border:1px solid;border-color:#fff #404040 #404040 #fff;box-shadow:inset -1px -1px 0 #808080;box-sizing:border-box;"></div><span class="t" style="top:1052.52px;font-size:11.5px;line-height:15px;color:#000;letter-spacing:-0.249px;left:422.5px;">D:\Doks\FSComp01\1...</span><svg class="a" style="left:389px;top:1044px" width="29" height="29" viewBox="0 0 29 29"><defs><linearGradient id="gcp" x1="0" y1="0" x2="0" y2="1"><stop offset="0" stop-color="#f8ee5a"/><stop offset="1" stop-color="#d2cc22"/></linearGradient></defs><rect x="0.7" y="0.7" width="27.6" height="27.6" rx="3.5" fill="url(#gcp)" stroke="#c3ac28" stroke-width="1.2"/><path d="M1.3 23L13 13.5l7.5 5.5l7.2-4.5v11a3 3 0 0 1-3 3h-20.4a3 3 0 0 1-3-3z" fill="#9cce3c"/><path d="M11.5 5L3 27M11.5 5L21.5 27" stroke="#4a4a40" stroke-width="1.3" fill="none" stroke-dasharray="2 0.6"/><path d="M10 1.5h3v4h-3z" fill="#333"/><circle cx="11.5" cy="7.2" r="2.4" fill="#3a3a3a"/><path d="M2.5 27.2h19.5" stroke="#6a6a3a" stroke-width="1"/></svg><div style="left:543px;top:1040px;width:159px;height:37px;background:#d4d0c8;border:1px solid;border-color:#fff #404040 #404040 #fff;box-shadow:inset -1px -1px 0 #808080;box-sizing:border-box;"></div><span class="t" style="top:1052.52px;font-size:11.5px;line-height:15px;color:#000;letter-spacing:-0.412px;left:582.5px;">Комплексная автом...</span><svg class="a" style="left:549px;top:1044.5px" width="28" height="28" viewBox="0 0 28 28"><defs><radialGradient id="g1cb" cx="42%" cy="28%" r="78%"><stop offset="0" stop-color="#fffcd8"/><stop offset="0.5" stop-color="#fcdc4a"/><stop offset="1" stop-color="#ec9c12"/></radialGradient></defs><circle cx="14" cy="14" r="13.7" fill="url(#g1cb)"/><path d="M4 11.4L8.3 9.2V19.8" fill="none" stroke="#dc2a1c" stroke-width="2.8"/><path d="M19.6 10.9A5.4 5.4 0 1 0 15.8 19.9H27.3" fill="none" stroke="#dc2a1c" stroke-width="2.8"/><path d="M17.8 13.2A2.3 2.3 0 1 0 15.9 16.6H27.3" fill="none" stroke="#dc2a1c" stroke-width="1.5"/><path d="M4 11.4L8.3 9.2V19.8" fill="none" stroke="#f9b43a" stroke-width="0.7"/><path d="M19.6 10.9A5.4 5.4 0 1 0 15.8 19.9H27.3" fill="none" stroke="#f9b43a" stroke-width="0.7"/></svg><div style="left:703px;top:1040px;width:159px;height:37px;background:#fff;border:1px solid;border-color:#404040 #fff #fff #404040;box-shadow:inset 1px 1px 0 #808080;box-sizing:border-box;"></div><span class="t" style="top:1052.52px;font-size:11.5px;line-height:15px;color:#000;font-weight:bold;letter-spacing:-0.201px;left:742px;">Комплексная авт...</span><svg class="a" style="left:708px;top:1044.5px" width="28" height="28" viewBox="0 0 28 28"><defs><radialGradient id="g1cb" cx="42%" cy="28%" r="78%"><stop offset="0" stop-color="#fffcd8"/><stop offset="0.5" stop-color="#fcdc4a"/><stop offset="1" stop-color="#ec9c12"/></radialGradient></defs><circle cx="14" cy="14" r="13.7" fill="url(#g1cb)"/><path d="M4 11.4L8.3 9.2V19.8" fill="none" stroke="#dc2a1c" stroke-width="2.8"/><path d="M19.6 10.9A5.4 5.4 0 1 0 15.8 19.9H27.3" fill="none" stroke="#dc2a1c" stroke-width="2.8"/><path d="M17.8 13.2A2.3 2.3 0 1 0 15.9 16.6H27.3" fill="none" stroke="#dc2a1c" stroke-width="1.5"/><path d="M4 11.4L8.3 9.2V19.8" fill="none" stroke="#f9b43a" stroke-width="0.7"/><path d="M19.6 10.9A5.4 5.4 0 1 0 15.8 19.9H27.3" fill="none" stroke="#f9b43a" stroke-width="0.7"/></svg><div style="left:865px;top:1040px;width:160px;height:37px;background:#d4d0c8;border:1px solid;border-color:#fff #404040 #404040 #fff;box-shadow:inset -1px -1px 0 #808080;box-sizing:border-box;"></div><span class="t" style="top:1052.52px;font-size:11.5px;line-height:15px;color:#000;letter-spacing:-0.362px;left:904px;">Конфигурация усил...</span><svg class="a" style="left:869px;top:1043px" width="32" height="32" viewBox="0 0 32 32"><circle cx="17" cy="17" r="11.5" fill="none" stroke="#3a9be0" stroke-width="5"/><rect x="8" y="14.5" width="18" height="4.5" fill="#3a9be0"/><rect x="18" y="19" width="12" height="6" fill="#d4d0c8"/><path d="M2 22C6 6 22 2 30 5" fill="none" stroke="#f0c830" stroke-width="2.4"/></svg><div style="left:1678px;top:1042px;width:1px;height:33px;background:#808080;"></div><div style="left:1679px;top:1042px;width:1px;height:33px;background:#fff;"></div><span class="t" style="top:1050.22px;font-size:11.5px;line-height:15px;color:#000;letter-spacing:0.367px;left:1688px;">RU</span><div style="left:1708px;top:1044px;width:1px;height:29px;background:#808080;"></div><div style="left:1709px;top:1044px;width:1px;height:29px;background:#fff;"></div><div style="left:1712px;top:1040px;width:206px;height:37px;background:#d4d0c8;border:1px solid;border-color:#808080 #fff #fff #808080;box-sizing:border-box;"></div><svg class="a" style="left:1718px;top:1053px" width="7" height="9" viewBox="0 0 7 9"><path d="M0.8 3.8L3.5 1L6.2 3.8M0.8 7.8L3.5 5L6.2 7.8" fill="none" stroke="#000" stroke-width="1.5"/></svg><svg class="a" style="left:1734px;top:1050px" width="19" height="18" viewBox="0 0 19 18"><path d="M2 1v16" stroke="#6a6a6a" stroke-width="1.8"/><path d="M3.5 2.5c4-2 7 2 13.5 0l-3 4.5l1.5 4c-5 2-8-2-12 0z" fill="#f4f4f4" stroke="#6a6a6a"/></svg><svg class="a" style="left:1758px;top:1049px" width="17" height="19" viewBox="0 0 17 19"><rect x="1.5" y="5.5" width="10" height="12" rx="1.5" fill="#e8e8e8" stroke="#444" stroke-width="1.4"/><path d="M6 1v5M11 1v5" stroke="#444" stroke-width="1.6"/><rect x="4.5" y="5" width="8" height="6" rx="1" fill="#fff" stroke="#444" stroke-width="1.4"/><path d="M8.5 11v3h5" stroke="#444" stroke-width="1.4" fill="none"/></svg><svg class="a" style="left:1783px;top:1049px" width="18" height="19" viewBox="0 0 18 19"><rect x="5.5" y="5.5" width="11" height="9" fill="#c8ccd2" stroke="#555" stroke-width="1.3"/><rect x="7" y="16" width="9" height="2" fill="#777"/><rect x="1.5" y="1.5" width="4" height="15" fill="#e8e8e8" stroke="#555" stroke-width="1.2"/><path d="M3.5 3v5" stroke="#555"/></svg><svg class="a" style="left:1807px;top:1051px" width="18" height="15" viewBox="0 0 18 15"><path d="M1 5h3l4-4v13l-4-4h-3z" fill="#e8e8e8" stroke="#8a8a8a"/><path d="M10.5 4.5c1.5 2 1.5 4 0 6M13 2.5c2.5 3 2.5 7 0 10" fill="none" stroke="#b8b8b8" stroke-width="1.3"/></svg><span class="t" style="top:1044.12px;font-size:11.5px;line-height:15px;color:#000;letter-spacing:-0.263px;left:1850.5px;">11:30</span><span class="t" style="top:1060.12px;font-size:11.5px;line-height:15px;color:#000;letter-spacing:-0.372px;left:1837px;">16.05.2013</span><svg class="a" style="left:1900px;top:1053px" width="15" height="13" viewBox="0 0 15 13"><rect x="0.5" y="0.5" width="14" height="10" fill="#2f7fe0" stroke="#1d5fb8"/><path d="M0.5 8.5h14" stroke="#8fc0f8" stroke-width="2"/><rect x="2" y="11" width="11" height="1.6" fill="#1d3f78"/></svg>
</div>
</body></html>
